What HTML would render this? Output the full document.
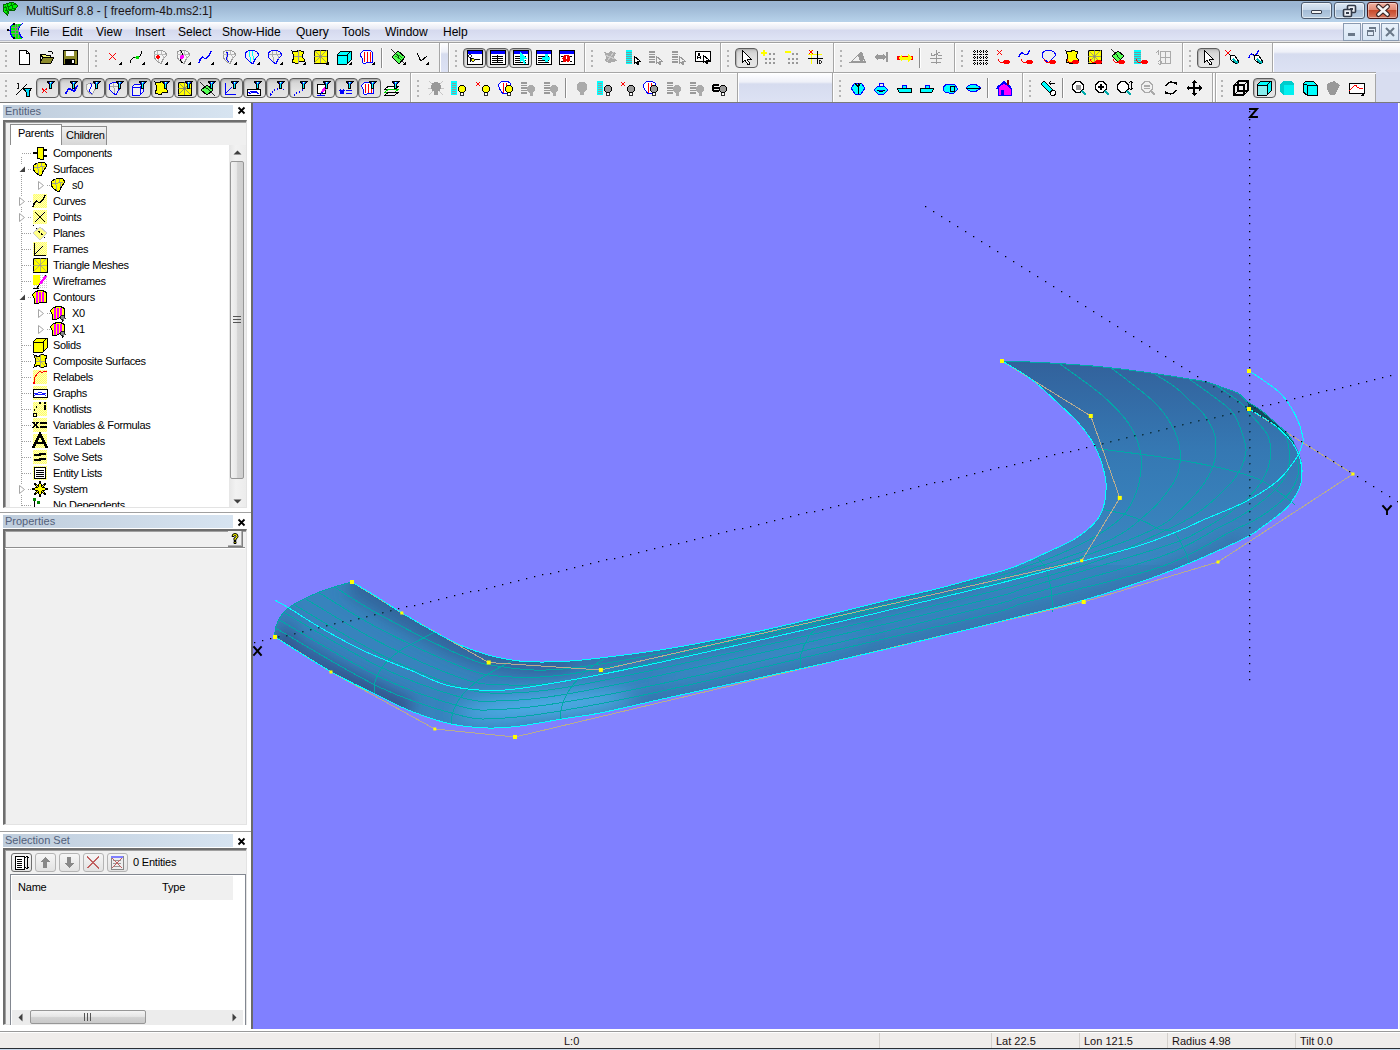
<!DOCTYPE html>
<html><head><meta charset="utf-8">
<style>
*{margin:0;padding:0;box-sizing:border-box}
html,body{width:1400px;height:1050px;overflow:hidden;background:#f0f0f0;font-family:"Liberation Sans",sans-serif;font-size:11px;color:#000}
.a{position:absolute}
svg{position:absolute;overflow:visible}
.t{position:absolute;white-space:pre;line-height:1}
.mi{position:absolute;top:25px;font-size:12px;color:#000;white-space:pre;line-height:14px}
.wb{position:absolute;top:2px;height:17px;border:1px solid #4c5a6e;border-radius:3px;background:linear-gradient(#dce8f4 0,#c6d6e8 45%,#a4bcd6 50%,#b8cde2 100%);box-shadow:inset 0 0 0 1px rgba(255,255,255,.55)}
.mb{position:absolute;top:23px;width:18px;height:18px;border:1px solid #8a9ab0;background:linear-gradient(#eaf2fb,#d8e6f5)}
.grip{position:absolute;width:3px;height:20px;background:radial-gradient(circle at 1px 1px,#b4b4b4 0.9px,transparent 1.1px) 0 0/3px 5px}
.bsep{position:absolute;width:2px;height:29px;border-left:1px solid #a6a6a6;border-right:1px solid #fff}
.isep{position:absolute;width:2px;height:20px;border-left:1px solid #8c8c8c;border-right:1px solid #fff}
.pb{position:absolute;width:23px;height:20px;border:1.5px solid #5e5e5e;border-radius:4px;background:linear-gradient(#c4c4c4,#d8d8d8 25%,#e2e2e2 60%,#e6e6e6);box-shadow:inset 1px 1px 1px #b0b0b0}
.hdr{position:absolute;height:13px;background:linear-gradient(90deg,#bfcddc,#d7e4f1);color:#52607a;font-size:11px;line-height:13px;padding-left:2px;white-space:pre}
.xcl{position:absolute;font-size:11px;font-weight:bold;line-height:11px}
.tr{position:absolute;font-size:11px;letter-spacing:-0.35px;white-space:pre;line-height:12px}

</style></head><body>
<!-- title bar -->
<div class="a" style="left:0;top:0;width:1400px;height:22px;background:linear-gradient(#222 0,#222 1px,#9bb5d2 1px,#9cb6d3 6px,#b6d1e9 21px,#b6d1e9 22px)"></div>
<svg style="left:0;top:0" width="24" height="22" viewBox="0 0 24 22" shape-rendering="crispEdges"><path d="M3 5 L9 3 L13 2 L18 6 L14 10.5 L9 11 L7.5 15 L3 11 Z" fill="#00ee00" stroke="#006600" stroke-width="1"/><path d="M4 8 L16 4 M5 11 L15 8 M7 4 L9 10 M11 3 L13 9 M5 6 L8 13" stroke="#007700" stroke-width="1" fill="none"/></svg>
<div class="t" style="left:26px;top:5px;font-size:12px;color:#1e1616">MultiSurf 8.8 - [ freeform-4b.ms2:1]</div>
<div class="wb" style="left:1301px;width:31px"></div>
<div class="wb" style="left:1334px;width:31px"></div>
<div class="a" style="left:1367px;top:2px;width:31px;height:17px;border:1px solid #4a1414;border-radius:3px;background:linear-gradient(#f0b0a0 0,#e08c78 45%,#c84a2c 50%,#d87860 100%);box-shadow:inset 0 0 0 1px rgba(255,255,255,.4)"></div>
<div class="a" style="left:1311px;top:10px;width:11px;height:4px;background:#f4f4f4;border:1px solid #3a4050;border-radius:1px"></div>
<svg style="left:1340px;top:3px" width="20" height="16" viewBox="0 0 20 16"><rect x="7.5" y="2.5" width="8" height="7" rx="1" fill="#eceff4" stroke="#323a48" stroke-width="1.6"/><rect x="10" y="5" width="3" height="2" fill="#323a48"/><rect x="3.5" y="6.5" width="8" height="7" rx="1" fill="#eceff4" stroke="#323a48" stroke-width="1.6"/><rect x="6" y="9" width="3" height="2" fill="#323a48"/></svg>
<svg style="left:1375px;top:4px" width="16" height="13" viewBox="0 0 16 13"><path d="M3.5 2.5 L12.5 10.5 M12.5 2.5 L3.5 10.5" stroke="#3a2424" stroke-width="5" stroke-linecap="round"/><path d="M3.5 2.5 L12.5 10.5 M12.5 2.5 L3.5 10.5" stroke="#f4f4f4" stroke-width="2.6" stroke-linecap="round"/></svg>
<!-- menu bar -->
<div class="a" style="left:0;top:22px;width:1400px;height:21px;background:linear-gradient(#fff 0,#f4f5fa 3px,#e8eaf4 7px,#d5d9ee 8px,#dfe4f5 18px,#b8bccc 18px,#b8bccc 19px,#e8e8e8 19px,#e8e8e8 20px,#a0a0a0 20px)"></div>
<svg style="left:0;top:22px" width="26" height="20" viewBox="0 22 26 20" shape-rendering="crispEdges"><path d="M13.5 23.5 L22.5 23.5 L19 27 L18.5 30.5 L19.5 34 L22.5 38.5 L13.5 38.5 L10.5 34 L10 30.5 L11.5 26 Z" fill="#00ee00"/><path d="M22.5 23.5 L19 27 L18.5 30.5 L19.5 34 L22.5 38.5 M13.5 23.5 L11 26 L10 30.5 L10.5 34 L13.5 38.5" stroke="#0000ff" stroke-width="1.2" fill="none"/><path d="M11 27.5 H19 M10.5 30.5 H18.5 M11 33.5 H19 M15.5 24 V38 M17 24 L19 38" stroke="#8a8a8a" stroke-width="0.9" fill="none"/><rect x="13" y="23" width="2" height="2" fill="#000"/><rect x="13" y="37" width="2" height="2" fill="#000"/><rect x="7" y="29" width="2" height="2" fill="#000"/></svg>
<div class="mi" style="left:30px">File</div>
<div class="mi" style="left:62px">Edit</div>
<div class="mi" style="left:96px">View</div>
<div class="mi" style="left:135px">Insert</div>
<div class="mi" style="left:178px">Select</div>
<div class="mi" style="left:222px">Show-Hide</div>
<div class="mi" style="left:296px">Query</div>
<div class="mi" style="left:342px">Tools</div>
<div class="mi" style="left:385px">Window</div>
<div class="mi" style="left:443px">Help</div>
<div class="mb" style="left:1343px"></div>
<div class="mb" style="left:1362px"></div>
<div class="mb" style="left:1381px"></div>
<div class="a" style="left:1348px;top:33px;width:7px;height:3px;background:#6a7888"></div>
<div class="a" style="left:1367px;top:30px;width:7px;height:6px;border:1px solid #6a7888;border-top-width:2px"></div>
<div class="a" style="left:1369px;top:27px;width:7px;height:5px;border-top:2px solid #6a7888;border-right:1px solid #6a7888"></div>
<svg style="left:1385px;top:27px" width="10" height="10" viewBox="0 0 10 10"><path d="M1 1 L9 9 M9 1 L1 9" stroke="#6a7888" stroke-width="2"/></svg>

<div class="a" style="left:0;top:43px;width:1400px;height:60px;background:#f0f0f0"></div>
<div class="a" style="left:0;top:43px;width:1400px;height:1px;background:#fff"></div>
<div class="a" style="left:0;top:72px;width:1400px;height:1px;background:#a6a6a6"></div>
<div class="a" style="left:0;top:73px;width:1400px;height:1px;background:#fff"></div>
<div class="a" style="left:0;top:102px;width:1400px;height:1px;background:#7a7a7a"></div>
<div class="a" style="left:441px;top:44px;width:7px;height:28px;background:linear-gradient(#fdfdff 0,#eef0f8 8px,#d6dcef 10px,#dde2f4 29px)"></div>
<div class="a" style="left:1274px;top:44px;width:126px;height:28px;background:linear-gradient(#fdfdff 0,#eef0f8 8px,#d6dcef 10px,#dde2f4 29px)"></div>
<div class="a" style="left:739px;top:74px;width:93px;height:28px;background:linear-gradient(#fdfdff 0,#eef0f8 8px,#d6dcef 10px,#dde2f4 29px)"></div>
<div class="a" style="left:1376px;top:72px;width:24px;height:30px;background:#d8ddf0"></div>
<div class="grip" style="left:5px;top:50px"></div>
<svg style="left:16px;top:49px" width="16" height="16" viewBox="0 0 16 16" shape-rendering="crispEdges"><path d="M3 1 L10 1 L13 4 L13 15 L3 15 Z" fill="#fff" stroke="#000"/><path d="M10 1 L10 4 L13 4" fill="none" stroke="#000"/></svg>
<svg style="left:39px;top:49px" width="16" height="16" viewBox="0 0 16 16" shape-rendering="crispEdges"><path d="M1 6 L1 14 L12 14 L15 8 L4 8 L1 14" fill="#8c8a2c" stroke="#000"/><path d="M1 6 L2 5 L6 5 L7 6 L11 6 L11 8 L4 8 Z" fill="#f0f070" stroke="#000"/><path d="M9 3 Q12 1 14 4 L13 5" fill="none" stroke="#000"/></svg>
<svg style="left:62px;top:49px" width="16" height="16" viewBox="0 0 16 16" shape-rendering="crispEdges"><rect x="1" y="1" width="14" height="14" fill="#8c8a2c" stroke="#000"/><rect x="4" y="2" width="8" height="5" fill="#fff"/><rect x="3" y="10" width="10" height="5" fill="#000"/><rect x="10" y="11" width="2" height="3" fill="#fff"/></svg>
<div class="bsep" style="left:88px;top:43px"></div>
<div class="grip" style="left:95px;top:50px"></div>
<svg style="left:106px;top:49px" width="16" height="16" viewBox="0 0 16 16" shape-rendering="crispEdges"><path d="M3 4 L10 11 M10 4 L3 11" stroke="#f00" stroke-width="1"/><path d="M12 16 L16 12 L16 16 Z" fill="#000"/></svg>
<svg style="left:129px;top:49px" width="16" height="16" viewBox="0 0 16 16" shape-rendering="crispEdges"><path d="M1 14 Q3 7 7 9 Q11 10 13 2" fill="none" stroke="#000" stroke-width="1"/><circle cx="8.5" cy="8.5" r="2" fill="#0d0"/><path d="M12 16 L16 12 L16 16 Z" fill="#000"/></svg>
<svg style="left:152px;top:49px" width="16" height="16" viewBox="0 0 16 16" shape-rendering="crispEdges"><path d="M2 3 Q7 -1 13 3 L15 6 Q11 9 9 15 Q4 12 2 8 Z" fill="#f4f4f4" stroke="#999" stroke-width="1"/><path d="M5 2 L7 13 M9 2 L12 10 M2 6 L14 5" stroke="#bbb" stroke-width="1" fill="none"/><circle cx="6" cy="8" r="1.8" fill="#f00"/><path d="M12 16 L16 12 L16 16 Z" fill="#000"/></svg>
<svg style="left:175px;top:49px" width="16" height="16" viewBox="0 0 16 16" shape-rendering="crispEdges"><path d="M2 3 Q7 -1 13 3 L15 6 Q11 9 9 15 Q4 12 2 8 Z" fill="#f4f4f4" stroke="#999" stroke-width="1"/><path d="M5 2 L7 13 M9 2 L12 10 M2 6 L14 5" stroke="#bbb" stroke-width="1" fill="none"/><path d="M5 1 Q9 4 6 8 Q4 12 8 14" fill="none" stroke="#000"/><circle cx="7" cy="8" r="2" fill="#f0f"/><path d="M12 16 L16 12 L16 16 Z" fill="#000"/></svg>
<svg style="left:198px;top:49px" width="16" height="16" viewBox="0 0 16 16" shape-rendering="crispEdges"><path d="M1 14 Q3 6 6 9 Q9 12 13 2" fill="none" stroke="#00f" stroke-width="1.4"/><path d="M12 16 L16 12 L16 16 Z" fill="#000"/></svg>
<svg style="left:221px;top:49px" width="16" height="16" viewBox="0 0 16 16" shape-rendering="crispEdges"><path d="M2 3 Q7 -1 13 3 L15 6 Q11 9 9 15 Q4 12 2 8 Z" fill="#f4f4f4" stroke="#999" stroke-width="1"/><path d="M5 2 L7 13 M9 2 L12 10 M2 6 L14 5" stroke="#bbb" stroke-width="1" fill="none"/><path d="M5 3 Q8 4 6 8 Q5 11 8 13" fill="none" stroke="#00f" stroke-width="1"/><path d="M12 16 L16 12 L16 16 Z" fill="#000"/></svg>
<svg style="left:244px;top:49px" width="16" height="16" viewBox="0 0 16 16" shape-rendering="crispEdges"><path d="M1 4 Q7 -1 13 3 L15 6 Q11 9 9 15 Q4 12 1 8 Z" fill="#f0f0f0" stroke="#00f" stroke-width="1"/><path d="M5 2 L7 13 M8 2 L10 11" stroke="#0ff" stroke-width="1"/><path d="M12 16 L16 12 L16 16 Z" fill="#000"/></svg>
<svg style="left:267px;top:49px" width="16" height="16" viewBox="0 0 16 16" shape-rendering="crispEdges"><path d="M1 4 Q7 -1 13 3 L15 6 Q11 9 9 15 Q4 12 1 8 Z" fill="#eee" stroke="#00f" stroke-width="1"/><path d="M5 2 L7 13 M9 2 L12 10 M2 6 L14 5" stroke="#aaa" stroke-width="1"/><path d="M12 16 L16 12 L16 16 Z" fill="#000"/></svg>
<svg style="left:290px;top:49px" width="16" height="16" viewBox="0 0 16 16" shape-rendering="crispEdges"><path d="M2 2 L7 3 L8 1 L14 3 L12 7 L15 12 L9 13 L8 15 L2 13 L4 8 Z" fill="#ff0" stroke="#000" stroke-width="1"/><path d="M4 8 L12 7 M8 1 L8 15" stroke="#999" fill="none"/><path d="M12 16 L16 12 L16 16 Z" fill="#000"/></svg>
<svg style="left:313px;top:49px" width="16" height="16" viewBox="0 0 16 16" shape-rendering="crispEdges"><rect x="1" y="1" width="13" height="13" fill="#ff0" stroke="#000"/><path d="M1 1 L14 14 M14 1 L1 14 M7.5 1 L7.5 14 M1 7.5 L14 7.5" stroke="#888" stroke-width="0.8"/><path d="M12 16 L16 12 L16 16 Z" fill="#000"/></svg>
<svg style="left:336px;top:49px" width="16" height="16" viewBox="0 0 16 16" shape-rendering="crispEdges"><path d="M1 6 L5 2 L15 2 L15 11 L11 15 L1 15 Z" fill="#0ff" stroke="#000"/><path d="M1 6 L11 6 L15 2 M11 6 L11 15" fill="none" stroke="#000"/><path d="M12 16 L16 12 L16 16 Z" fill="#000"/></svg>
<svg style="left:359px;top:49px" width="16" height="16" viewBox="0 0 16 16" shape-rendering="crispEdges"><path d="M2 4 Q5 0 9 2 Q13 1 14 5 L13 14 L9 13 L5 15 L3 13 L3 9 Q1 7 2 4 Z" fill="#fff" stroke="#00f" stroke-width="1"/><path d="M5 3 L5 13 M8 3 L8 13 M11 3 L11 13" stroke="#f00" stroke-width="1"/><path d="M12 16 L16 12 L16 16 Z" fill="#000"/></svg>
<div class="isep" style="left:381px;top:48px"></div>
<svg style="left:390px;top:49px" width="16" height="16" viewBox="0 0 16 16" shape-rendering="crispEdges"><path d="M8 2 L15 8 L9 15 L2 8 Z" fill="#5f5" stroke="#000"/><path d="M1 0 L16 16" stroke="#000" stroke-width="0.8"/><path d="M5 7 L11 11 M7 5 L12 9" stroke="#080" stroke-width="0.8"/><path d="M12 16 L16 12 L16 16 Z" fill="#000"/></svg>
<svg style="left:413px;top:49px" width="16" height="16" viewBox="0 0 16 16" shape-rendering="crispEdges"><path d="M4 4 L8 12 L14 7 M8 12 L6 9" fill="none" stroke="#000" stroke-width="1"/><path d="M12 16 L16 12 L16 16 Z" fill="#000"/></svg>
<div class="bsep" style="left:439px;top:43px"></div>
<div class="bsep" style="left:448px;top:43px"></div>
<div class="grip" style="left:455px;top:50px"></div>
<div class="pb" style="left:463px;top:48px"></div>
<svg style="left:466px;top:49px" width="16" height="16" viewBox="0 0 16 16" shape-rendering="crispEdges"><rect x="1" y="1" width="15" height="14" fill="#fff" stroke="#000" stroke-width="1"/><rect x="1.5" y="1.5" width="14" height="3" fill="#00f"/><path d="M4 7 L4 13 M4 9 L7 9 M9 10 L14 10" stroke="#000"/><circle cx="4" cy="7" r="1.3" fill="#fff" stroke="#000" stroke-width="0.8"/><circle cx="7" cy="11" r="1.3" fill="#ff0" stroke="#000" stroke-width="0.8"/></svg>
<div class="pb" style="left:486px;top:48px"></div>
<svg style="left:489px;top:49px" width="16" height="16" viewBox="0 0 16 16" shape-rendering="crispEdges"><rect x="1" y="1" width="15" height="14" fill="#fff" stroke="#000" stroke-width="1"/><rect x="1.5" y="1.5" width="14" height="3" fill="#00f"/><path d="M3 7 L14 7 M3 9 L14 9 M3 11 L14 11 M3 13 L14 13 M8.5 6 L8.5 14" stroke="#000" stroke-width="1"/></svg>
<div class="pb" style="left:509px;top:48px"></div>
<svg style="left:512px;top:49px" width="16" height="16" viewBox="0 0 16 16" shape-rendering="crispEdges"><rect x="1" y="1" width="15" height="14" fill="#fff" stroke="#000" stroke-width="1"/><rect x="1.5" y="1.5" width="14" height="3" fill="#00f"/><path d="M3 7 L14 7 M3 9 L14 9 M3 11 L14 11 M3 13 L14 13" stroke="#000" stroke-width="1"/><path d="M8 3 L15 10 L12 10 L14 15 L12 15 L10 11 L8 13 Z" fill="#0ff"/></svg>
<svg style="left:535px;top:49px" width="16" height="16" viewBox="0 0 16 16" shape-rendering="crispEdges"><rect x="1" y="1" width="15" height="14" fill="#fff" stroke="#000" stroke-width="1"/><rect x="1.5" y="1.5" width="14" height="3" fill="#00f"/><path d="M3 7 L14 7 M3 9 L14 9 M3 11 L14 11 M3 13 L14 13" stroke="#000" stroke-width="1"/><path d="M7 9 L15 9 M11 5 L11 13" stroke="#0ff" stroke-width="3"/></svg>
<svg style="left:558px;top:49px" width="16" height="16" viewBox="0 0 16 16" shape-rendering="crispEdges"><rect x="1" y="1" width="15" height="14" fill="#fff" stroke="#000" stroke-width="1"/><rect x="1.5" y="1.5" width="14" height="3" fill="#00f"/><circle cx="8.5" cy="9.5" r="4" fill="#e00"/><path d="M8.5 7 L8.5 10 M8.5 11.5 L8.5 12.5" stroke="#fff" stroke-width="1.4"/><path d="M3 7 L5 7 M12 7 L14 7 M3 12 L5 12 M12 12 L14 12" stroke="#000"/></svg>
<div class="bsep" style="left:584px;top:43px"></div>
<div class="grip" style="left:591px;top:50px"></div>
<svg style="left:602px;top:49px" width="16" height="16" viewBox="0 0 16 16" shape-rendering="crispEdges"><path d="M2 3 L6 4 L9 2 L14 4 L12 8 L15 12 L10 13 L7 14 L3 12 L4 8 Z" fill="#aaa"/><path d="M3 6 L13 10 M5 12 L12 3" stroke="#ccc" stroke-width="1"/></svg>
<svg style="left:625px;top:49px" width="16" height="16" viewBox="0 0 16 16" shape-rendering="crispEdges"><rect x="1" y="1" width="6" height="14" fill="#0ff"/><path d="M1 3 L7 3 M1 5 L7 5 M1 7 L7 7 M1 9 L7 9 M1 11 L7 11 M1 13 L7 13" stroke="#888" stroke-width="0.8"/><path d="M9 7 L9 15 L11 13 L13 16 L14 15 L12 12 L15 12 Z" fill="#fff" stroke="#000"/></svg>
<svg style="left:648px;top:49px" width="16" height="16" viewBox="0 0 16 16" shape-rendering="crispEdges"><path d="M1 3 L7 3 M1 5.5 L7 5.5 M1 8 L7 8 M1 10.5 L7 10.5 M1 13 L7 13" stroke="#999" stroke-width="1.3"/><path d="M8 7 L8 15 L10 13 L12 16 L13 15 L11 12 L14 12 Z" fill="#f0f0f0" stroke="#999"/></svg>
<svg style="left:671px;top:49px" width="16" height="16" viewBox="0 0 16 16" shape-rendering="crispEdges"><path d="M1 3 L7 3 M1 5.5 L7 5.5 M1 8 L7 8 M1 10.5 L7 10.5 M1 13 L7 13" stroke="#999" stroke-width="1.3"/><path d="M8 7 L8 15 L10 13 L12 16 L13 15 L11 12 L14 12 Z" fill="#f0f0f0" stroke="#999"/></svg>
<svg style="left:694px;top:49px" width="16" height="16" viewBox="0 0 16 16" shape-rendering="crispEdges"><rect x="1" y="2" width="15" height="10" fill="#fff" stroke="#000" stroke-width="1"/><path d="M3 10 L5 4 L7 10 M4 8 L6 8" stroke="#000" fill="none"/><path d="M9 6 L9 14 L11 12 L13 15 L14 14 L12 11 L15 11 Z" fill="#fff" stroke="#000"/></svg>
<div class="bsep" style="left:720px;top:43px"></div>
<div class="grip" style="left:727px;top:50px"></div>
<div class="pb" style="left:735px;top:48px"></div>
<svg style="left:738px;top:49px" width="16" height="16" viewBox="0 0 16 16" shape-rendering="crispEdges"><path d="M4 1 L4 14 L7 11 L10 16 L12 15 L9 10 L13 10 Z" fill="#fff" stroke="#000" stroke-width="1"/></svg>
<svg style="left:761px;top:49px" width="16" height="16" viewBox="0 0 16 16" shape-rendering="crispEdges"><path d="M3 1 L3 7 M0 4 L6 4" stroke="#ff0" stroke-width="2"/><path d="M8 5 h2 M12 5 h2 M4 10 h2 M8 10 h2 M12 10 h2 M4 14 h2 M8 14 h2 M12 14 h2" stroke="#999" stroke-width="2"/></svg>
<svg style="left:784px;top:49px" width="16" height="16" viewBox="0 0 16 16" shape-rendering="crispEdges"><path d="M1 3 L7 3" stroke="#ff0" stroke-width="2"/><path d="M8 5 h2 M12 5 h2 M4 10 h2 M8 10 h2 M12 10 h2 M4 14 h2 M8 14 h2 M12 14 h2" stroke="#999" stroke-width="2"/></svg>
<svg style="left:807px;top:49px" width="16" height="16" viewBox="0 0 16 16" shape-rendering="crispEdges"><path d="M4 1 L4 15 M1 5 L15 5" stroke="#ff0" stroke-width="1"/><path d="M10 2 L10 15 M1 9 L16 9" stroke="#000" stroke-width="1"/><path d="M2 1 L6 5 M6 1 L2 5" stroke="#f00" stroke-width="1"/><path d="M12 11 L12 15 L14 14 L14 12 Z" fill="none" stroke="#000" stroke-width="0.8"/></svg>
<div class="bsep" style="left:833px;top:43px"></div>
<div class="grip" style="left:840px;top:50px"></div>
<svg style="left:850px;top:49px" width="16" height="16" viewBox="0 0 16 16" shape-rendering="crispEdges"><path d="M1 13 L10 4 L15 12 L15 13 Z" fill="none" stroke="#999" stroke-width="1.4"/><path d="M8 6 L12 3 L15 11 L10 12 Z" fill="#999"/></svg>
<svg style="left:873px;top:49px" width="16" height="16" viewBox="0 0 16 16" shape-rendering="crispEdges"><path d="M1 8 L5 4 L5 6 L10 6 L10 4 L13 8 L10 12 L10 10 L5 10 L5 12 Z" fill="#999"/><path d="M14 3 L14 13" stroke="#999" stroke-width="2"/></svg>
<svg style="left:897px;top:49px" width="16" height="16" viewBox="0 0 16 16" shape-rendering="crispEdges"><rect x="0" y="7" width="16" height="4" fill="#f00"/><path d="M1 9 L5 5 L5 7.5 L11 7.5 L11 5 L15 9 L11 13 L11 10.5 L5 10.5 L5 13 Z" fill="#ff0"/></svg>
<div class="isep" style="left:919px;top:48px"></div>
<svg style="left:928px;top:49px" width="16" height="16" viewBox="0 0 16 16" shape-rendering="crispEdges"><path d="M8 1 L8 15 M2 9 L14 9 M3 13 L13 13 M4 4 Q2 6 5 7 L12 3 M6 5 L14 7" stroke="#999" stroke-width="1" fill="none"/></svg>
<div class="bsep" style="left:954px;top:43px"></div>
<div class="grip" style="left:961px;top:50px"></div>
<svg style="left:972px;top:49px" width="16" height="16" viewBox="0 0 16 16" shape-rendering="crispEdges"><rect x="2" y="1" width="1" height="1" fill="#000"/><rect x="2" y="3" width="1" height="1" fill="#000"/><rect x="2" y="5" width="1" height="1" fill="#000"/><rect x="2" y="7" width="1" height="1" fill="#000"/><rect x="2" y="9" width="1" height="1" fill="#000"/><rect x="2" y="11" width="1" height="1" fill="#000"/><rect x="2" y="13" width="1" height="1" fill="#000"/><rect x="2" y="15" width="1" height="1" fill="#000"/><rect x="5" y="1" width="1" height="1" fill="#000"/><rect x="5" y="3" width="1" height="1" fill="#000"/><rect x="5" y="5" width="1" height="1" fill="#000"/><rect x="5" y="7" width="1" height="1" fill="#000"/><rect x="5" y="9" width="1" height="1" fill="#000"/><rect x="5" y="11" width="1" height="1" fill="#000"/><rect x="5" y="13" width="1" height="1" fill="#000"/><rect x="5" y="15" width="1" height="1" fill="#000"/><rect x="8" y="1" width="1" height="1" fill="#000"/><rect x="8" y="3" width="1" height="1" fill="#000"/><rect x="8" y="5" width="1" height="1" fill="#000"/><rect x="8" y="7" width="1" height="1" fill="#000"/><rect x="8" y="9" width="1" height="1" fill="#000"/><rect x="8" y="11" width="1" height="1" fill="#000"/><rect x="8" y="13" width="1" height="1" fill="#000"/><rect x="8" y="15" width="1" height="1" fill="#000"/><rect x="11" y="1" width="1" height="1" fill="#000"/><rect x="11" y="3" width="1" height="1" fill="#000"/><rect x="11" y="5" width="1" height="1" fill="#000"/><rect x="11" y="7" width="1" height="1" fill="#000"/><rect x="11" y="9" width="1" height="1" fill="#000"/><rect x="11" y="11" width="1" height="1" fill="#000"/><rect x="11" y="13" width="1" height="1" fill="#000"/><rect x="11" y="15" width="1" height="1" fill="#000"/><rect x="14" y="1" width="1" height="1" fill="#000"/><rect x="14" y="3" width="1" height="1" fill="#000"/><rect x="14" y="5" width="1" height="1" fill="#000"/><rect x="14" y="7" width="1" height="1" fill="#000"/><rect x="14" y="9" width="1" height="1" fill="#000"/><rect x="14" y="11" width="1" height="1" fill="#000"/><rect x="14" y="13" width="1" height="1" fill="#000"/><rect x="14" y="15" width="1" height="1" fill="#000"/><rect x="1" y="2" width="1" height="1" fill="#000"/><rect x="3" y="2" width="1" height="1" fill="#000"/><rect x="5" y="2" width="1" height="1" fill="#000"/><rect x="7" y="2" width="1" height="1" fill="#000"/><rect x="9" y="2" width="1" height="1" fill="#000"/><rect x="11" y="2" width="1" height="1" fill="#000"/><rect x="13" y="2" width="1" height="1" fill="#000"/><rect x="15" y="2" width="1" height="1" fill="#000"/><rect x="1" y="5" width="1" height="1" fill="#000"/><rect x="3" y="5" width="1" height="1" fill="#000"/><rect x="5" y="5" width="1" height="1" fill="#000"/><rect x="7" y="5" width="1" height="1" fill="#000"/><rect x="9" y="5" width="1" height="1" fill="#000"/><rect x="11" y="5" width="1" height="1" fill="#000"/><rect x="13" y="5" width="1" height="1" fill="#000"/><rect x="15" y="5" width="1" height="1" fill="#000"/><rect x="1" y="8" width="1" height="1" fill="#000"/><rect x="3" y="8" width="1" height="1" fill="#000"/><rect x="5" y="8" width="1" height="1" fill="#000"/><rect x="7" y="8" width="1" height="1" fill="#000"/><rect x="9" y="8" width="1" height="1" fill="#000"/><rect x="11" y="8" width="1" height="1" fill="#000"/><rect x="13" y="8" width="1" height="1" fill="#000"/><rect x="15" y="8" width="1" height="1" fill="#000"/><rect x="1" y="11" width="1" height="1" fill="#000"/><rect x="3" y="11" width="1" height="1" fill="#000"/><rect x="5" y="11" width="1" height="1" fill="#000"/><rect x="7" y="11" width="1" height="1" fill="#000"/><rect x="9" y="11" width="1" height="1" fill="#000"/><rect x="11" y="11" width="1" height="1" fill="#000"/><rect x="13" y="11" width="1" height="1" fill="#000"/><rect x="15" y="11" width="1" height="1" fill="#000"/><rect x="1" y="14" width="1" height="1" fill="#000"/><rect x="3" y="14" width="1" height="1" fill="#000"/><rect x="5" y="14" width="1" height="1" fill="#000"/><rect x="7" y="14" width="1" height="1" fill="#000"/><rect x="9" y="14" width="1" height="1" fill="#000"/><rect x="11" y="14" width="1" height="1" fill="#000"/><rect x="13" y="14" width="1" height="1" fill="#000"/><rect x="15" y="14" width="1" height="1" fill="#000"/></svg>
<svg style="left:995px;top:49px" width="16" height="16" viewBox="0 0 16 16" shape-rendering="crispEdges"><path d="M2 1 L7 6 M7 1 L2 6" stroke="#f00" stroke-width="1"/><path d="M3 10 Q4 14 8 13" fill="none" stroke="#f00" stroke-width="1"/><ellipse cx="11.5" cy="13" rx="3.5" ry="2.3" fill="#f00"/></svg>
<svg style="left:1018px;top:49px" width="16" height="16" viewBox="0 0 16 16" shape-rendering="crispEdges"><path d="M1 8 Q3 2 6 5 Q9 8 12 1" fill="none" stroke="#00f" stroke-width="1.3"/><path d="M3 10 Q4 14 8 13" fill="none" stroke="#f00" stroke-width="1"/><ellipse cx="11.5" cy="13" rx="3.5" ry="2.3" fill="#f00"/></svg>
<svg style="left:1041px;top:49px" width="16" height="16" viewBox="0 0 16 16" shape-rendering="crispEdges"><path d="M1 4 Q7 -1 13 3 L15 6 Q11 9 9 14 Q4 12 1 8 Z" fill="#eee" stroke="#00f"/><path d="M3 10 Q4 14 8 13" fill="none" stroke="#f00" stroke-width="1"/><ellipse cx="11.5" cy="13" rx="3.5" ry="2.3" fill="#f00"/></svg>
<svg style="left:1064px;top:49px" width="16" height="16" viewBox="0 0 16 16" shape-rendering="crispEdges"><path d="M2 2 L7 3 L8 1 L14 3 L12 7 L15 12 L9 13 L8 15 L2 13 L4 8 Z" fill="#ff0" stroke="#000"/><path d="M3 10 Q4 14 8 13" fill="none" stroke="#f00" stroke-width="1"/><ellipse cx="11.5" cy="13" rx="3.5" ry="2.3" fill="#f00"/></svg>
<svg style="left:1087px;top:49px" width="16" height="16" viewBox="0 0 16 16" shape-rendering="crispEdges"><rect x="1" y="1" width="13" height="13" fill="#ff0" stroke="#000"/><path d="M1 1 L14 14 M14 1 L1 14 M7.5 1 L7.5 14 M1 7.5 L14 7.5" stroke="#888" stroke-width="0.8"/><path d="M3 10 Q4 14 8 13" fill="none" stroke="#f00" stroke-width="1"/><ellipse cx="11.5" cy="13" rx="3.5" ry="2.3" fill="#f00"/></svg>
<svg style="left:1110px;top:49px" width="16" height="16" viewBox="0 0 16 16" shape-rendering="crispEdges"><path d="M8 2 L14 7 L8 13 L2 7 Z" fill="#5f5" stroke="#000"/><path d="M1 0 L14 14" stroke="#000" stroke-width="0.8"/><path d="M3 10 Q4 14 8 13" fill="none" stroke="#f00" stroke-width="1"/><ellipse cx="11.5" cy="13" rx="3.5" ry="2.3" fill="#f00"/></svg>
<svg style="left:1133px;top:49px" width="16" height="16" viewBox="0 0 16 16" shape-rendering="crispEdges"><rect x="1" y="1" width="7" height="14" fill="#0ff"/><path d="M1 3 L8 3 M1 5 L8 5 M1 7 L8 7 M1 9 L8 9 M1 11 L8 11 M1 13 L8 13" stroke="#888" stroke-width="0.8"/><path d="M3 10 Q4 14 8 13" fill="none" stroke="#f00" stroke-width="1"/><ellipse cx="11.5" cy="13" rx="3.5" ry="2.3" fill="#f00"/></svg>
<svg style="left:1155px;top:49px" width="16" height="16" viewBox="0 0 16 16" shape-rendering="crispEdges"><path d="M5 2 L15 2 L15 14 L5 14 Z M10 2 L10 14 M5 8 L15 8" fill="none" stroke="#aaa" stroke-width="1"/><path d="M3 6 L3 2 L1 4 M3 14 A2 2 0 1 0 3 13" stroke="#aaa" fill="none"/></svg>
<div class="bsep" style="left:1182px;top:43px"></div>
<div class="grip" style="left:1189px;top:50px"></div>
<div class="pb" style="left:1197px;top:48px"></div>
<svg style="left:1200px;top:49px" width="16" height="16" viewBox="0 0 16 16" shape-rendering="crispEdges"><path d="M4 1 L4 14 L7 11 L10 16 L12 15 L9 10 L13 10 Z" fill="#fff" stroke="#000" stroke-width="1"/></svg>
<svg style="left:1224px;top:49px" width="16" height="16" viewBox="0 0 16 16" shape-rendering="crispEdges"><path d="M1 1 L7 7 M7 1 L1 7" stroke="#f00" stroke-width="1"/><path d="M6 6 L11 7 L15 13 L12 15 L7 11 Z" fill="#fff" stroke="#000"/><path d="M11 12 L14 14 M9 10 L12 13" stroke="#0bb" stroke-width="2"/></svg>
<svg style="left:1248px;top:49px" width="16" height="16" viewBox="0 0 16 16" shape-rendering="crispEdges"><path d="M1 9 Q2 3 5 6 Q8 8 11 1" fill="none" stroke="#00f" stroke-width="1.3"/><path d="M6 6 L11 7 L15 13 L12 15 L7 11 Z" fill="#fff" stroke="#000"/><path d="M11 12 L14 14 M9 10 L12 13" stroke="#0bb" stroke-width="2"/></svg>
<div class="bsep" style="left:1272px;top:43px"></div>
<div class="grip" style="left:5px;top:80px"></div>
<svg style="left:16px;top:80px" width="16" height="16" viewBox="0 0 16 16" shape-rendering="crispEdges"><path d="M1 4 L2 3 L2 8 M1 8 L3 8" stroke="#000" stroke-width="0.9" fill="none"/><path d="M0 15 L11 4" stroke="#000"/><path d="M7 8 L16 8 L13 12 L13 16 L10 16 L10 12 Z" fill="#00e0ff" stroke="#000"/></svg>
<div class="pb" style="left:36px;top:78px"></div>
<svg style="left:39px;top:80px" width="16" height="16" viewBox="0 0 16 16" shape-rendering="crispEdges"><path d="M3 8.5 L8 13 M8 8.5 L3 13" stroke="#f00" stroke-width="1"/><path d="M7.5 0.5 H16 V1.8 L13.2 4.6 V8.5 H10.3 V4.6 L7.5 1.8 Z" fill="#000"/><path d="M9.2 1.6 H14.3 L12.3 3.8 V7.5 H11.2 V3.8 Z" fill="#00f0ff"/><path d="M10.5 1.6 H13 L11.8 3 Z" fill="#e0ffff"/><path d="M9.2 1.6 L11.2 3.8 M14.3 1.6 L12.3 3.8" stroke="#0000ff" stroke-width="0.8"/></svg>
<div class="pb" style="left:59px;top:78px"></div>
<svg style="left:62px;top:80px" width="16" height="16" viewBox="0 0 16 16" shape-rendering="crispEdges"><path d="M3.4 14.4 L6.3 8.8 L8.4 8.8 L12 11.5 L15.6 5.4" fill="none" stroke="#00f" stroke-width="1.6"/><path d="M7.5 0.5 H16 V1.8 L13.2 4.6 V8.5 H10.3 V4.6 L7.5 1.8 Z" fill="#000"/><path d="M9.2 1.6 H14.3 L12.3 3.8 V7.5 H11.2 V3.8 Z" fill="#00f0ff"/><path d="M10.5 1.6 H13 L11.8 3 Z" fill="#e0ffff"/><path d="M9.2 1.6 L11.2 3.8 M14.3 1.6 L12.3 3.8" stroke="#0000ff" stroke-width="0.8"/></svg>
<div class="pb" style="left:82px;top:78px"></div>
<svg style="left:85px;top:80px" width="16" height="16" viewBox="0 0 16 16" shape-rendering="crispEdges"><path d="M1 5 Q5 2 10 4 L12 7 Q9 10 7 15 Q3 12 1 9 Z" fill="#f4f4f4" stroke="#aaa"/><path d="M5 3 Q8 5 5 9 Q4 12 7 14" fill="none" stroke="#00f" stroke-width="1"/><path d="M7.5 0.5 H16 V1.8 L13.2 4.6 V8.5 H10.3 V4.6 L7.5 1.8 Z" fill="#000"/><path d="M9.2 1.6 H14.3 L12.3 3.8 V7.5 H11.2 V3.8 Z" fill="#00f0ff"/><path d="M10.5 1.6 H13 L11.8 3 Z" fill="#e0ffff"/><path d="M9.2 1.6 L11.2 3.8 M14.3 1.6 L12.3 3.8" stroke="#0000ff" stroke-width="0.8"/></svg>
<div class="pb" style="left:105px;top:78px"></div>
<svg style="left:108px;top:80px" width="16" height="16" viewBox="0 0 16 16" shape-rendering="crispEdges"><path d="M1 5 Q5 1 10 3 L13 7 Q10 10 8 15 Q3 12 1 9 Z" fill="#eee" stroke="#00f" stroke-width="1"/><path d="M5 3 L7 13 M2 7 L12 6" stroke="#aaa"/><path d="M7.5 0.5 H16 V1.8 L13.2 4.6 V8.5 H10.3 V4.6 L7.5 1.8 Z" fill="#000"/><path d="M9.2 1.6 H14.3 L12.3 3.8 V7.5 H11.2 V3.8 Z" fill="#00f0ff"/><path d="M10.5 1.6 H13 L11.8 3 Z" fill="#e0ffff"/><path d="M9.2 1.6 L11.2 3.8 M14.3 1.6 L12.3 3.8" stroke="#0000ff" stroke-width="0.8"/></svg>
<div class="pb" style="left:128px;top:78px"></div>
<svg style="left:131px;top:80px" width="16" height="16" viewBox="0 0 16 16" shape-rendering="crispEdges"><path d="M1 7 L4 4 L12 4 L12 12 L9 15 L1 15 Z" fill="#f0f0f0" stroke="#00f" stroke-width="1"/><path d="M1 7 L9 7 L12 4 M9 7 L9 15" fill="none" stroke="#00f" stroke-width="1"/><path d="M7.5 0.5 H16 V1.8 L13.2 4.6 V8.5 H10.3 V4.6 L7.5 1.8 Z" fill="#000"/><path d="M9.2 1.6 H14.3 L12.3 3.8 V7.5 H11.2 V3.8 Z" fill="#00f0ff"/><path d="M10.5 1.6 H13 L11.8 3 Z" fill="#e0ffff"/><path d="M9.2 1.6 L11.2 3.8 M14.3 1.6 L12.3 3.8" stroke="#0000ff" stroke-width="0.8"/></svg>
<div class="pb" style="left:151px;top:78px"></div>
<svg style="left:154px;top:80px" width="16" height="16" viewBox="0 0 16 16" shape-rendering="crispEdges"><path d="M1 2 L6 3 L7 1 L13 3 L11 7 L14 12 L8 13 L7 15 L1 13 L3 8 Z" fill="#ff0" stroke="#000"/><path d="M7.5 0.5 H16 V1.8 L13.2 4.6 V8.5 H10.3 V4.6 L7.5 1.8 Z" fill="#000"/><path d="M9.2 1.6 H14.3 L12.3 3.8 V7.5 H11.2 V3.8 Z" fill="#00f0ff"/><path d="M10.5 1.6 H13 L11.8 3 Z" fill="#e0ffff"/><path d="M9.2 1.6 L11.2 3.8 M14.3 1.6 L12.3 3.8" stroke="#0000ff" stroke-width="0.8"/></svg>
<div class="pb" style="left:174px;top:78px"></div>
<svg style="left:177px;top:80px" width="16" height="16" viewBox="0 0 16 16" shape-rendering="crispEdges"><rect x="1" y="2" width="13" height="13" fill="#ff0" stroke="#000"/><path d="M1 2 L14 15 M14 2 L1 15 M7.5 2 L7.5 15 M1 8.5 L14 8.5" stroke="#777" stroke-width="0.8"/><path d="M7.5 0.5 H16 V1.8 L13.2 4.6 V8.5 H10.3 V4.6 L7.5 1.8 Z" fill="#000"/><path d="M9.2 1.6 H14.3 L12.3 3.8 V7.5 H11.2 V3.8 Z" fill="#00f0ff"/><path d="M10.5 1.6 H13 L11.8 3 Z" fill="#e0ffff"/><path d="M9.2 1.6 L11.2 3.8 M14.3 1.6 L12.3 3.8" stroke="#0000ff" stroke-width="0.8"/></svg>
<div class="pb" style="left:197px;top:78px"></div>
<svg style="left:200px;top:80px" width="16" height="16" viewBox="0 0 16 16" shape-rendering="crispEdges"><path d="M7 5 L13 10 L7 15 L1 10 Z" fill="#5f5" stroke="#000"/><path d="M0 2 L15 16" stroke="#000" stroke-width="0.8"/><path d="M7.5 0.5 H16 V1.8 L13.2 4.6 V8.5 H10.3 V4.6 L7.5 1.8 Z" fill="#000"/><path d="M9.2 1.6 H14.3 L12.3 3.8 V7.5 H11.2 V3.8 Z" fill="#00f0ff"/><path d="M10.5 1.6 H13 L11.8 3 Z" fill="#e0ffff"/><path d="M9.2 1.6 L11.2 3.8 M14.3 1.6 L12.3 3.8" stroke="#0000ff" stroke-width="0.8"/></svg>
<div class="pb" style="left:220px;top:78px"></div>
<svg style="left:223px;top:80px" width="16" height="16" viewBox="0 0 16 16" shape-rendering="crispEdges"><path d="M2 3 L2 14 L13 14 M2 14 L9 7" stroke="#00f" stroke-width="1" fill="none"/><path d="M7.5 0.5 H16 V1.8 L13.2 4.6 V8.5 H10.3 V4.6 L7.5 1.8 Z" fill="#000"/><path d="M9.2 1.6 H14.3 L12.3 3.8 V7.5 H11.2 V3.8 Z" fill="#00f0ff"/><path d="M10.5 1.6 H13 L11.8 3 Z" fill="#e0ffff"/><path d="M9.2 1.6 L11.2 3.8 M14.3 1.6 L12.3 3.8" stroke="#0000ff" stroke-width="0.8"/></svg>
<div class="pb" style="left:243px;top:78px"></div>
<svg style="left:246px;top:80px" width="16" height="16" viewBox="0 0 16 16" shape-rendering="crispEdges"><rect x="1" y="9" width="13" height="6" fill="#fff" stroke="#000" stroke-width="1"/><path d="M2 13 Q7 9 12 13 M3 14 Q8 11 13 14" stroke="#00f" fill="none"/><path d="M10 8 L10 4" stroke="#000"/><path d="M7.5 0.5 H16 V1.8 L13.2 4.6 V8.5 H10.3 V4.6 L7.5 1.8 Z" fill="#000"/><path d="M9.2 1.6 H14.3 L12.3 3.8 V7.5 H11.2 V3.8 Z" fill="#00f0ff"/><path d="M10.5 1.6 H13 L11.8 3 Z" fill="#e0ffff"/><path d="M9.2 1.6 L11.2 3.8 M14.3 1.6 L12.3 3.8" stroke="#0000ff" stroke-width="0.8"/></svg>
<div class="pb" style="left:266px;top:78px"></div>
<svg style="left:269px;top:80px" width="16" height="16" viewBox="0 0 16 16" shape-rendering="crispEdges"><path d="M1 15 h1 M3 12 h1 M5 10 h1 M8 9 h1 M11 8 h1" stroke="#00f" stroke-width="2"/><path d="M1 13 L3 15 M14 9 L15 10" stroke="#00f"/><path d="M7.5 0.5 H16 V1.8 L13.2 4.6 V8.5 H10.3 V4.6 L7.5 1.8 Z" fill="#000"/><path d="M9.2 1.6 H14.3 L12.3 3.8 V7.5 H11.2 V3.8 Z" fill="#00f0ff"/><path d="M10.5 1.6 H13 L11.8 3 Z" fill="#e0ffff"/><path d="M9.2 1.6 L11.2 3.8 M14.3 1.6 L12.3 3.8" stroke="#0000ff" stroke-width="0.8"/></svg>
<div class="pb" style="left:289px;top:78px"></div>
<svg style="left:292px;top:80px" width="16" height="16" viewBox="0 0 16 16" shape-rendering="crispEdges"><path d="M2 15 h1 M4 13 h1 M7 12 h1 M10 10 h1" stroke="#00f" stroke-width="2"/><path d="M7.5 0.5 H16 V1.8 L13.2 4.6 V8.5 H10.3 V4.6 L7.5 1.8 Z" fill="#000"/><path d="M9.2 1.6 H14.3 L12.3 3.8 V7.5 H11.2 V3.8 Z" fill="#00f0ff"/><path d="M10.5 1.6 H13 L11.8 3 Z" fill="#e0ffff"/><path d="M9.2 1.6 L11.2 3.8 M14.3 1.6 L12.3 3.8" stroke="#0000ff" stroke-width="0.8"/></svg>
<div class="pb" style="left:312px;top:78px"></div>
<svg style="left:315px;top:80px" width="16" height="16" viewBox="0 0 16 16" shape-rendering="crispEdges"><path d="M2 4 L10 4 L10 13 L2 13 Z" fill="#fff" stroke="#000"/><path d="M2 15 L10 15 M5 15 L12 6" stroke="#00f" stroke-width="1"/><path d="M7 12 L11 7" stroke="#f0f" stroke-width="2.5"/><path d="M7.5 0.5 H16 V1.8 L13.2 4.6 V8.5 H10.3 V4.6 L7.5 1.8 Z" fill="#000"/><path d="M9.2 1.6 H14.3 L12.3 3.8 V7.5 H11.2 V3.8 Z" fill="#00f0ff"/><path d="M10.5 1.6 H13 L11.8 3 Z" fill="#e0ffff"/><path d="M9.2 1.6 L11.2 3.8 M14.3 1.6 L12.3 3.8" stroke="#0000ff" stroke-width="0.8"/></svg>
<div class="pb" style="left:335px;top:78px"></div>
<svg style="left:338px;top:80px" width="16" height="16" viewBox="0 0 16 16" shape-rendering="crispEdges"><path d="M2 10 L6 14 M6 10 L2 14" stroke="#00f" stroke-width="1.5"/><path d="M8 10.5 H14 M8 13.5 H14" stroke="#00f" stroke-width="1"/><path d="M7.5 0.5 H16 V1.8 L13.2 4.6 V8.5 H10.3 V4.6 L7.5 1.8 Z" fill="#000"/><path d="M9.2 1.6 H14.3 L12.3 3.8 V7.5 H11.2 V3.8 Z" fill="#00f0ff"/><path d="M10.5 1.6 H13 L11.8 3 Z" fill="#e0ffff"/><path d="M9.2 1.6 L11.2 3.8 M14.3 1.6 L12.3 3.8" stroke="#0000ff" stroke-width="0.8"/></svg>
<div class="pb" style="left:358px;top:78px"></div>
<svg style="left:361px;top:80px" width="16" height="16" viewBox="0 0 16 16" shape-rendering="crispEdges"><path d="M1 5 Q4 1 8 3 Q12 2 13 6 L12 14 L8 13 L4 15 L2 13 L2 9 Q0 7 1 5 Z" fill="#fff" stroke="#00f" stroke-width="1"/><path d="M4 4 L4 13 M7 4 L7 13 M10 4 L10 13" stroke="#f00" stroke-width="1"/><path d="M7.5 0.5 H16 V1.8 L13.2 4.6 V8.5 H10.3 V4.6 L7.5 1.8 Z" fill="#000"/><path d="M9.2 1.6 H14.3 L12.3 3.8 V7.5 H11.2 V3.8 Z" fill="#00f0ff"/><path d="M10.5 1.6 H13 L11.8 3 Z" fill="#e0ffff"/><path d="M9.2 1.6 L11.2 3.8 M14.3 1.6 L12.3 3.8" stroke="#0000ff" stroke-width="0.8"/></svg>
<svg style="left:384px;top:80px" width="16" height="16" viewBox="0 0 16 16" shape-rendering="crispEdges"><path d="M1 9 L5 6 L15 6 L11 9 Z" fill="#fff" stroke="#000"/><path d="M1 12 L5 9 L15 9 L11 12 Z" fill="none" stroke="#0c0" stroke-width="1"/><path d="M1 15 L5 12 L15 12 L11 15 Z" fill="none" stroke="#000"/><path d="M7.5 0.5 H16 V1.8 L13.2 4.6 V8.5 H10.3 V4.6 L7.5 1.8 Z" fill="#000"/><path d="M9.2 1.6 H14.3 L12.3 3.8 V7.5 H11.2 V3.8 Z" fill="#00f0ff"/><path d="M10.5 1.6 H13 L11.8 3 Z" fill="#e0ffff"/><path d="M9.2 1.6 L11.2 3.8 M14.3 1.6 L12.3 3.8" stroke="#0000ff" stroke-width="0.8"/></svg>
<div class="bsep" style="left:410px;top:73px"></div>
<div class="grip" style="left:417px;top:80px"></div>
<svg style="left:428px;top:80px" width="16" height="16" viewBox="0 0 16 16" shape-rendering="crispEdges"><path d="M1 1 L15 15 M15 1 L1 15 M0 8 L16 8" stroke="#bbb" stroke-width="0.8"/><circle cx="8" cy="7" r="5" fill="#999"/><rect x="6" y="11" width="4" height="4" fill="#999"/></svg>
<svg style="left:451px;top:80px" width="16" height="16" viewBox="0 0 16 16" shape-rendering="crispEdges"><rect x="0" y="1" width="6" height="14" fill="#0ff"/><path d="M1 3 H5 M1 5 H5 M1 7 H5 M1 9 H5 M1 11 H5 M1 13 H5" stroke="#999" stroke-width="1"/><circle cx="11" cy="9" r="3.8" fill="#ff0" stroke="#000"/><rect x="9.5" y="12.5" width="3" height="3" fill="#fff" stroke="#000" stroke-width="0.8"/></svg>
<svg style="left:475px;top:80px" width="16" height="16" viewBox="0 0 16 16" shape-rendering="crispEdges"><path d="M1 2 L5 6 M5 2 L1 6" stroke="#f00"/><circle cx="11" cy="9" r="3.8" fill="#ff0" stroke="#000"/><rect x="9.5" y="12.5" width="3" height="3" fill="#fff" stroke="#000" stroke-width="0.8"/></svg>
<svg style="left:498px;top:80px" width="16" height="16" viewBox="0 0 16 16" shape-rendering="crispEdges"><path d="M1 4 Q4 0 8 2 Q11 1 13 4 L12 13 L5 14 L3 11 Q0 8 1 4 Z" fill="#fff" stroke="#00f"/><path d="M5 3 L5 13 M8 3 L8 12" stroke="#f00"/><circle cx="11" cy="9" r="3.8" fill="#ff0" stroke="#000"/><rect x="9.5" y="12.5" width="3" height="3" fill="#fff" stroke="#000" stroke-width="0.8"/></svg>
<svg style="left:520px;top:80px" width="16" height="16" viewBox="0 0 16 16" shape-rendering="crispEdges"><path d="M1 3 L7 3 M1 5.5 L7 5.5 M1 8 L7 8 M1 10.5 L7 10.5 M1 13 L7 13" stroke="#999" stroke-width="1.3"/><circle cx="11" cy="9" r="3.8" fill="#aaa"/><rect x="9.5" y="12.5" width="3" height="3" fill="#aaa"/></svg>
<svg style="left:543px;top:80px" width="16" height="16" viewBox="0 0 16 16" shape-rendering="crispEdges"><path d="M1 3 L7 3 M1 5.5 L7 5.5 M1 8 L7 8 M1 10.5 L7 10.5 M1 13 L7 13" stroke="#999" stroke-width="1.3"/><circle cx="11" cy="9" r="3.8" fill="#aaa"/><rect x="9.5" y="12.5" width="3" height="3" fill="#aaa"/></svg>
<div class="isep" style="left:565px;top:78px"></div>
<svg style="left:574px;top:80px" width="16" height="16" viewBox="0 0 16 16" shape-rendering="crispEdges"><circle cx="8" cy="7" r="5.5" fill="#aaa"/><rect x="6" y="12" width="4" height="3" fill="#aaa"/></svg>
<svg style="left:597px;top:80px" width="16" height="16" viewBox="0 0 16 16" shape-rendering="crispEdges"><rect x="0" y="1" width="6" height="14" fill="#0ff"/><path d="M1 3 H5 M1 5 H5 M1 7 H5 M1 9 H5 M1 11 H5 M1 13 H5" stroke="#999" stroke-width="1"/><circle cx="11" cy="9" r="3.8" fill="#999" stroke="#000"/><rect x="9.5" y="12.5" width="3" height="3" fill="#fff" stroke="#000" stroke-width="0.8"/></svg>
<svg style="left:620px;top:80px" width="16" height="16" viewBox="0 0 16 16" shape-rendering="crispEdges"><path d="M1 2 L5 6 M5 2 L1 6" stroke="#f00"/><circle cx="11" cy="9" r="3.8" fill="#999" stroke="#000"/><rect x="9.5" y="12.5" width="3" height="3" fill="#fff" stroke="#000" stroke-width="0.8"/></svg>
<svg style="left:643px;top:80px" width="16" height="16" viewBox="0 0 16 16" shape-rendering="crispEdges"><path d="M1 4 Q4 0 8 2 Q11 1 13 4 L12 13 L5 14 L3 11 Q0 8 1 4 Z" fill="#fff" stroke="#00f"/><path d="M5 3 L5 13 M8 3 L8 12" stroke="#f00"/><circle cx="11" cy="9" r="3.8" fill="#999" stroke="#000"/><rect x="9.5" y="12.5" width="3" height="3" fill="#fff" stroke="#000" stroke-width="0.8"/></svg>
<svg style="left:666px;top:80px" width="16" height="16" viewBox="0 0 16 16" shape-rendering="crispEdges"><path d="M1 3 L7 3 M1 5.5 L7 5.5 M1 8 L7 8 M1 10.5 L7 10.5 M1 13 L7 13" stroke="#999" stroke-width="1.3"/><circle cx="11" cy="9" r="3.8" fill="#aaa"/><rect x="9.5" y="12.5" width="3" height="3" fill="#aaa"/></svg>
<svg style="left:689px;top:80px" width="16" height="16" viewBox="0 0 16 16" shape-rendering="crispEdges"><path d="M1 3 L7 3 M1 5.5 L7 5.5 M1 8 L7 8 M1 10.5 L7 10.5 M1 13 L7 13" stroke="#999" stroke-width="1.3"/><circle cx="11" cy="9" r="3.8" fill="#aaa"/><rect x="9.5" y="12.5" width="3" height="3" fill="#aaa"/></svg>
<svg style="left:712px;top:80px" width="16" height="16" viewBox="0 0 16 16" shape-rendering="crispEdges"><path d="M1 5 L7 5 M1 8 L7 8 M1 11 L7 11 M1 5 L1 11" stroke="#000" stroke-width="1.3"/><circle cx="11" cy="9" r="3.8" fill="#999" stroke="#000"/><rect x="9.5" y="12.5" width="3" height="3" fill="#fff" stroke="#000" stroke-width="0.8"/></svg>
<div class="bsep" style="left:737px;top:73px"></div>
<div class="bsep" style="left:832px;top:73px"></div>
<div class="grip" style="left:839px;top:80px"></div>
<svg style="left:850px;top:80px" width="16" height="16" viewBox="0 0 16 16" shape-rendering="crispEdges"><path d="M1 8 L5 3 L11 3 L15 8 L11 14 L5 14 Z" fill="#0ff" stroke="#00f" stroke-width="1"/><path d="M8 3 L8 14 M5 3 L8 7 L11 3" stroke="#000" fill="none"/></svg>
<svg style="left:873px;top:80px" width="16" height="16" viewBox="0 0 16 16" shape-rendering="crispEdges"><path d="M1 10 L5 6 L11 6 L15 10 L11 14 L5 14 Z" fill="#0ff" stroke="#00f" stroke-width="1"/><path d="M6 6 L6 3 L10 3 L10 6 M4 10 L12 10" stroke="#00f" fill="none"/><path d="M4 10 Q8 13 12 10" stroke="#000" fill="none"/></svg>
<svg style="left:896px;top:80px" width="16" height="16" viewBox="0 0 16 16" shape-rendering="crispEdges"><path d="M1 8 L15 8 L15 12 L3 12 Z" fill="#0ff" stroke="#000" stroke-width="1"/><path d="M6 8 L6 5 L10 5 L10 8" fill="#0ff" stroke="#00f"/></svg>
<svg style="left:919px;top:80px" width="16" height="16" viewBox="0 0 16 16" shape-rendering="crispEdges"><path d="M1 8 L15 8 L13 12 L1 12 Z" fill="#0ff" stroke="#000" stroke-width="1"/><path d="M6 8 L6 5 L10 5 L10 8" fill="#0ff" stroke="#00f"/></svg>
<svg style="left:942px;top:80px" width="16" height="16" viewBox="0 0 16 16" shape-rendering="crispEdges"><path d="M1 9 Q2 4 7 4 L12 4 L16 9 L12 13 L7 13 Q2 13 1 9 Z" fill="#0ff" stroke="#00f" stroke-width="1"/><rect x="8" y="6" width="4" height="5" fill="none" stroke="#000"/></svg>
<svg style="left:965px;top:80px" width="16" height="16" viewBox="0 0 16 16" shape-rendering="crispEdges"><path d="M1 8 Q4 4 10 4 L16 8 L10 12 Q4 12 1 8 Z" fill="#0ff" stroke="#00f" stroke-width="1"/><path d="M1 8 L16 8" stroke="#000"/></svg>
<div class="isep" style="left:987px;top:78px"></div>
<svg style="left:996px;top:80px" width="16" height="16" viewBox="0 0 16 16" shape-rendering="crispEdges"><path d="M1 8 L8 2 L15 8 L15 15 L2 15 L2 8 Z" fill="#f0f" stroke="#00f" stroke-width="1"/><path d="M1 8 L8 2 L15 8" stroke="#00f" stroke-width="2" fill="none"/><rect x="11" y="0" width="2" height="5" fill="#800"/><rect x="5" y="10" width="3" height="5" fill="#00f"/></svg>
<div class="bsep" style="left:1022px;top:73px"></div>
<div class="grip" style="left:1029px;top:80px"></div>
<svg style="left:1040px;top:80px" width="16" height="16" viewBox="0 0 16 16" shape-rendering="crispEdges"><path d="M1 4 L4 1 L15 12 L12 15 Z" fill="#0ff" stroke="#000" stroke-width="1"/><circle cx="13" cy="13" r="2.5" fill="#fff" stroke="#000"/><path d="M9 3 L15 3 M9 3 L11 1 M9 3 L11 5" stroke="#000"/></svg>
<div class="isep" style="left:1062px;top:78px"></div>
<svg style="left:1071px;top:80px" width="16" height="16" viewBox="0 0 16 16" shape-rendering="crispEdges"><circle cx="7" cy="7" r="5.5" fill="#fff" stroke="#000" stroke-width="1.3"/><path d="M11 11 L15 15" stroke="#0aa" stroke-width="2.5"/><rect x="4.5" y="4.5" width="5" height="5" fill="#999"/></svg>
<svg style="left:1094px;top:80px" width="16" height="16" viewBox="0 0 16 16" shape-rendering="crispEdges"><circle cx="7" cy="7" r="5.5" fill="#fff" stroke="#000" stroke-width="1.3"/><path d="M11 11 L15 15" stroke="#0aa" stroke-width="2.5"/><path d="M4 7 L10 7 M7 4 L7 10" stroke="#000" stroke-width="2"/></svg>
<svg style="left:1117px;top:80px" width="16" height="16" viewBox="0 0 16 16" shape-rendering="crispEdges"><circle cx="6" cy="7" r="5.5" fill="#fff" stroke="#000" stroke-width="1.3"/><path d="M10 11 L14 15" stroke="#0aa" stroke-width="2.5"/><path d="M14 1 L14 10 M12 3 L14 1 L16 3 M12 8 L14 10 L16 8" stroke="#000" fill="none"/></svg>
<svg style="left:1140px;top:80px" width="16" height="16" viewBox="0 0 16 16" shape-rendering="crispEdges"><circle cx="7" cy="7" r="5.5" fill="none" stroke="#aaa" stroke-width="1.3"/><path d="M11 11 L15 15" stroke="#aaa" stroke-width="2.5"/><path d="M4 6 L10 6 M4 8.5 L10 8.5" stroke="#aaa" stroke-width="1.3"/></svg>
<svg style="left:1163px;top:80px" width="16" height="16" viewBox="0 0 16 16" shape-rendering="crispEdges"><path d="M3 6 A6 6 0 0 1 13 4 M13 10 A6 6 0 0 1 3 12" stroke="#000" stroke-width="1.4" fill="none"/><path d="M11 2 L14 2 L14 6 Z M5 14 L2 14 L2 10 Z" fill="#000"/></svg>
<svg style="left:1186px;top:80px" width="16" height="16" viewBox="0 0 16 16" shape-rendering="crispEdges"><path d="M8 1 L8 15 M1 8 L15 8" stroke="#000" stroke-width="2"/><path d="M8 0 L11 3 L5 3 Z M8 16 L11 13 L5 13 Z M0 8 L3 5 L3 11 Z M16 8 L13 5 L13 11 Z" fill="#000"/></svg>
<div class="bsep" style="left:1212px;top:73px"></div>
<div class="bsep" style="left:1215px;top:73px"></div>
<div class="grip" style="left:1221px;top:80px"></div>
<svg style="left:1233px;top:80px" width="16" height="16" viewBox="0 0 16 16" shape-rendering="crispEdges"><path d="M1 5 L5 1 L15 1 L15 11 L11 15 L1 15 Z M1 5 L11 5 L15 1 M11 5 L11 15 M5 1 L5 11 L1 15 M5 11 L15 11" fill="none" stroke="#000" stroke-width="1.1"/></svg>
<div class="pb" style="left:1253px;top:78px"></div>
<svg style="left:1256px;top:80px" width="16" height="16" viewBox="0 0 16 16" shape-rendering="crispEdges"><path d="M1 5 L5 1 L15 1 L15 11 L11 15 L1 15 Z" fill="#0ff" stroke="#000" stroke-width="1"/><path d="M1 5 L11 5 L15 1 M11 5 L11 15" fill="none" stroke="#000" stroke-width="1"/><rect x="2" y="6" width="9" height="9" fill="#8ee"/></svg>
<svg style="left:1279px;top:80px" width="16" height="16" viewBox="0 0 16 16" shape-rendering="crispEdges"><path d="M1 4 L4 1 L12 1 L15 4 L15 15 L4 15 L1 12 Z" fill="#0cc"/><rect x="5" y="5" width="10" height="10" fill="#0ff" opacity="0.7"/></svg>
<svg style="left:1302px;top:80px" width="16" height="16" viewBox="0 0 16 16" shape-rendering="crispEdges"><path d="M1 4 L4 1 L12 2 L15 5 L15 15 L5 15 L1 12 Z" fill="#0ff" stroke="#000" stroke-width="1"/><path d="M1 4 L5 5 L15 5 M5 5 L5 15" stroke="#000" fill="none"/></svg>
<svg style="left:1325px;top:80px" width="16" height="16" viewBox="0 0 16 16" shape-rendering="crispEdges"><path d="M2 4 L9 1 L15 5 L10 15 L5 15 L2 9 Z" fill="#999"/></svg>
<svg style="left:1348px;top:80px" width="16" height="16" viewBox="0 0 16 16" shape-rendering="crispEdges"><rect x="1" y="3" width="15" height="10" fill="#fff" stroke="#000" stroke-width="1"/><path d="M1 11 L5 7 Q8 4 9 7 Q11 9 15 8" stroke="#f00" fill="none"/><path d="M12 16 L16 12 L16 16 Z" fill="#000"/></svg>
<div class="a" style="left:1375px;top:74px;width:1px;height:28px;background:#a6a6a6"></div>
<div class="a" style="left:0;top:103px;width:252px;height:926px;background:#fff"></div>
<div class="a" style="left:251px;top:103px;width:2px;height:926px;background:#6a6a6a"></div>
<div class="hdr" style="left:3px;top:105px;width:230px">Entities</div>
<svg style="left:238px;top:107px" width="7" height="7" viewBox="0 0 7 7"><path d="M0.5 0.5 L6.5 6.5 M6.5 0.5 L0.5 6.5" stroke="#000" stroke-width="1.8"/></svg>
<div class="a" style="left:3px;top:120px;width:244px;height:388px;background:#f0f0f0;border-top:2px solid #6e6e6e;border-left:2px solid #6e6e6e;border-right:1px solid #e3e3e3;border-bottom:1px solid #e3e3e3;box-shadow:inset 1px 1px 0 #a0a0a0"></div>
<div class="a" style="left:60px;top:126px;width:47px;height:19px;background:linear-gradient(#f2f2f2,#e4e4e4 50%,#d6d6d6);border:1px solid #8d8d8d;border-bottom:none"></div>
<div class="t" style="left:66px;top:130px;font-size:11px;letter-spacing:-0.3px">Children</div>
<div class="a" style="left:10px;top:124px;width:52px;height:22px;background:#fff;border:1px solid #8d8d8d;border-bottom:none"></div>
<div class="t" style="left:18px;top:128px;font-size:11px;letter-spacing:-0.3px">Parents</div>
<div class="a" style="left:10px;top:145px;width:236px;height:362px;background:#fff"></div>
<div class="a" style="left:229px;top:145px;width:17px;height:362px;background:linear-gradient(90deg,#e6e6e6,#f2f2f2 40%,#ececec)"></div>
<svg style="left:233px;top:150px" width="9" height="5" viewBox="0 0 9 5"><path d="M0.5 4.5 L4.5 0.5 L8.5 4.5 Z" fill="#404040"/></svg>
<svg style="left:233px;top:499px" width="9" height="5" viewBox="0 0 9 5"><path d="M0.5 0.5 L4.5 4.5 L8.5 0.5 Z" fill="#404040"/></svg>
<div class="a" style="left:230px;top:161px;width:14px;height:318px;border:1px solid #979797;border-radius:2px;background:linear-gradient(90deg,#f2f2f2,#e8e8e8 45%,#d4d4d4 55%,#cfcfcf)"></div>
<svg style="left:233px;top:316px" width="8" height="7" viewBox="0 0 8 7"><path d="M0 0.5 H8 M0 3.5 H8 M0 6.5 H8" stroke="#555" stroke-width="1"/></svg>
<svg style="left:0;top:0" width="0" height="0"><defs><pattern id="dith" width="2" height="2" patternUnits="userSpaceOnUse"><rect width="1" height="1" fill="#fff" opacity="0.55"/><rect x="1" y="1" width="1" height="1" fill="#fff" opacity="0.55"/></pattern><pattern id="dith2" width="2" height="2" patternUnits="userSpaceOnUse"><rect width="1" height="1" fill="#ccc"/></pattern></defs></svg>
<div class="a" style="left:10px;top:145px;width:219px;height:362px;overflow:hidden">
<div class="a" style="left:-10px;top:-145px;width:260px;height:520px"><div class="a" style="left:21px;top:157px;width:1px;height:350px;background:repeating-linear-gradient(#a0a0a0 0,#a0a0a0 1px,transparent 1px,transparent 2px)"></div>
<div class="a" style="left:22px;top:153px;width:10px;height:1px;background:repeating-linear-gradient(90deg,#a0a0a0 0,#a0a0a0 1px,transparent 1px,transparent 2px)"></div>
<svg style="left:32px;top:145px" width="16" height="16" viewBox="0 0 16 16" shape-rendering="crispEdges"><path d="M5 5 Q5 2 8 2 L11 2 L11 14 L8 14 Q5 14 5 11 Z" fill="#ff0" stroke="#000" stroke-width="1"/><path d="M1 8 L5 8 M11 5 L15 5 M11 11 L15 11" stroke="#000" stroke-width="2"/></svg>
<div class="tr" style="left:53px;top:147px">Components</div>
<div class="a" style="left:26px;top:169px;width:6px;height:1px;background:repeating-linear-gradient(90deg,#a0a0a0 0,#a0a0a0 1px,transparent 1px,transparent 2px)"></div>
<div class="a" style="left:18px;top:164px;width:9px;height:11px;background:#fff"></div>
<svg style="left:19px;top:166px" width="7" height="7" viewBox="0 0 7 7"><path d="M6 0.5 L6 6 L0.5 6 Z" fill="#404040"/></svg>
<svg style="left:32px;top:161px" width="16" height="16" viewBox="0 0 16 16" shape-rendering="crispEdges"><path d="M1 5 Q6 0 13 2 L15 5 Q11 9 9 15 Q3 12 1 8 Z" fill="#ff0" stroke="#000" stroke-width="1"/><path d="M5 2 L7 13 M9 2 L11 10 M2 7 L13 5" stroke="#999" stroke-width="0.9" fill="none"/></svg>
<div class="tr" style="left:53px;top:163px">Surfaces</div>
<div class="a" style="left:45px;top:185px;width:5px;height:1px;background:repeating-linear-gradient(90deg,#a0a0a0 0,#a0a0a0 1px,transparent 1px,transparent 2px)"></div>
<div class="a" style="left:37px;top:180px;width:9px;height:11px;background:#fff"></div>
<svg style="left:38px;top:181px" width="7" height="9" viewBox="0 0 7 9"><path d="M0.5 0.5 L5.5 4.5 L0.5 8.5 Z" fill="#fff" stroke="#a6a6a6"/></svg>
<svg style="left:50px;top:177px" width="16" height="16" viewBox="0 0 16 16" shape-rendering="crispEdges"><path d="M1 5 Q6 0 13 2 L15 5 Q11 9 9 15 Q3 12 1 8 Z" fill="#ff0" stroke="#000" stroke-width="1"/><path d="M5 2 L7 13 M9 2 L11 10 M2 7 L13 5" stroke="#999" stroke-width="0.9" fill="none"/></svg>
<div class="tr" style="left:72px;top:179px">s0</div>
<div class="a" style="left:26px;top:201px;width:6px;height:1px;background:repeating-linear-gradient(90deg,#a0a0a0 0,#a0a0a0 1px,transparent 1px,transparent 2px)"></div>
<div class="a" style="left:18px;top:196px;width:9px;height:11px;background:#fff"></div>
<svg style="left:19px;top:197px" width="7" height="9" viewBox="0 0 7 9"><path d="M0.5 0.5 L5.5 4.5 L0.5 8.5 Z" fill="#fff" stroke="#a6a6a6"/></svg>
<svg style="left:32px;top:193px" width="16" height="16" viewBox="0 0 16 16" shape-rendering="crispEdges"><rect x="1" y="1" width="14" height="14" fill="#ffff66"/><rect x="1" y="1" width="14" height="14" fill="url(#dith)"/><path d="M1 14 Q3 6 6 9 Q9 12 13 2" fill="none" stroke="#000" stroke-width="1.4"/></svg>
<div class="tr" style="left:53px;top:195px">Curves</div>
<div class="a" style="left:26px;top:217px;width:6px;height:1px;background:repeating-linear-gradient(90deg,#a0a0a0 0,#a0a0a0 1px,transparent 1px,transparent 2px)"></div>
<div class="a" style="left:18px;top:212px;width:9px;height:11px;background:#fff"></div>
<svg style="left:19px;top:213px" width="7" height="9" viewBox="0 0 7 9"><path d="M0.5 0.5 L5.5 4.5 L0.5 8.5 Z" fill="#fff" stroke="#a6a6a6"/></svg>
<svg style="left:32px;top:209px" width="16" height="16" viewBox="0 0 16 16" shape-rendering="crispEdges"><rect x="1" y="1" width="14" height="14" fill="#ffff66"/><rect x="1" y="1" width="14" height="14" fill="url(#dith)"/><path d="M3 3 L13 13 M13 3 L3 13" stroke="#000" stroke-width="1"/></svg>
<div class="tr" style="left:53px;top:211px">Points</div>
<div class="a" style="left:22px;top:233px;width:10px;height:1px;background:repeating-linear-gradient(90deg,#a0a0a0 0,#a0a0a0 1px,transparent 1px,transparent 2px)"></div>
<svg style="left:32px;top:225px" width="16" height="16" viewBox="0 0 16 16" shape-rendering="crispEdges"><path d="M8 2 L15 8 L8 15 L1 8 Z" fill="#ffff88" stroke="#ccc"/><path d="M1 0 L15 15" stroke="#000" stroke-width="1" stroke-dasharray="2 2"/></svg>
<div class="tr" style="left:53px;top:227px">Planes</div>
<div class="a" style="left:22px;top:249px;width:10px;height:1px;background:repeating-linear-gradient(90deg,#a0a0a0 0,#a0a0a0 1px,transparent 1px,transparent 2px)"></div>
<svg style="left:32px;top:241px" width="16" height="16" viewBox="0 0 16 16" shape-rendering="crispEdges"><rect x="1" y="1" width="14" height="14" fill="#ffff66"/><rect x="1" y="1" width="14" height="14" fill="url(#dith)"/><path d="M2 2 L2 14 L14 14 M2 14 L11 5" stroke="#000" stroke-width="1" fill="none"/></svg>
<div class="tr" style="left:53px;top:243px">Frames</div>
<div class="a" style="left:22px;top:265px;width:10px;height:1px;background:repeating-linear-gradient(90deg,#a0a0a0 0,#a0a0a0 1px,transparent 1px,transparent 2px)"></div>
<svg style="left:32px;top:257px" width="16" height="16" viewBox="0 0 16 16" shape-rendering="crispEdges"><rect x="1" y="1" width="14" height="14" fill="#ff0" stroke="#000" stroke-width="1"/><path d="M1 1 L15 15 M15 1 L1 15 M8 1 L8 15 M1 8 L15 8" stroke="#999" stroke-width="0.7"/></svg>
<div class="tr" style="left:53px;top:259px">Triangle Meshes</div>
<div class="a" style="left:22px;top:281px;width:10px;height:1px;background:repeating-linear-gradient(90deg,#a0a0a0 0,#a0a0a0 1px,transparent 1px,transparent 2px)"></div>
<svg style="left:32px;top:273px" width="16" height="16" viewBox="0 0 16 16" shape-rendering="crispEdges"><rect x="1" y="1" width="14" height="14" fill="url(#dith2)"/><path d="M1 2 L8 2 L8 12 L1 12 Z" fill="#ff0"/><path d="M1 15 L7 15 M5 15 L14 2" stroke="#000" stroke-width="1"/><path d="M8 11 L14 3" stroke="#f0f" stroke-width="2.5"/></svg>
<div class="tr" style="left:53px;top:275px">Wireframes</div>
<div class="a" style="left:26px;top:297px;width:6px;height:1px;background:repeating-linear-gradient(90deg,#a0a0a0 0,#a0a0a0 1px,transparent 1px,transparent 2px)"></div>
<div class="a" style="left:18px;top:292px;width:9px;height:11px;background:#fff"></div>
<svg style="left:19px;top:294px" width="7" height="7" viewBox="0 0 7 7"><path d="M6 0.5 L6 6 L0.5 6 Z" fill="#404040"/></svg>
<svg style="left:32px;top:289px" width="16" height="16" viewBox="0 0 16 16" shape-rendering="crispEdges"><path d="M1 5 Q4 1 8 2 Q13 1 15 5 L14 14 L9 13 L5 15 L2 14 L2 9 Q0 7 1 5 Z" fill="#ff0" stroke="#000" stroke-width="1"/><path d="M5 3 L5 14 M8 3 L8 13 M11 3 L11 13" stroke="#f0f" stroke-width="1.3"/></svg>
<div class="tr" style="left:53px;top:291px">Contours</div>
<div class="a" style="left:45px;top:313px;width:5px;height:1px;background:repeating-linear-gradient(90deg,#a0a0a0 0,#a0a0a0 1px,transparent 1px,transparent 2px)"></div>
<div class="a" style="left:37px;top:308px;width:9px;height:11px;background:#fff"></div>
<svg style="left:38px;top:309px" width="7" height="9" viewBox="0 0 7 9"><path d="M0.5 0.5 L5.5 4.5 L0.5 8.5 Z" fill="#fff" stroke="#a6a6a6"/></svg>
<svg style="left:50px;top:305px" width="16" height="16" viewBox="0 0 16 16" shape-rendering="crispEdges"><path d="M1 5 Q4 1 8 2 Q13 1 15 5 L14 12 L9 13 L5 15 L2 14 L2 9 Q0 7 1 5 Z" fill="#ff0" stroke="#000" stroke-width="1"/><path d="M5 3 L5 14 M8 3 L8 13 M11 3 L11 12" stroke="#f0f" stroke-width="1.3"/><circle cx="12.5" cy="12.5" r="2.5" fill="#888" stroke="#000" stroke-width="0.8"/><path d="M12.5 15 L12.5 17" stroke="#000" stroke-width="1.3"/></svg>
<div class="tr" style="left:72px;top:307px">X0</div>
<div class="a" style="left:45px;top:329px;width:5px;height:1px;background:repeating-linear-gradient(90deg,#a0a0a0 0,#a0a0a0 1px,transparent 1px,transparent 2px)"></div>
<div class="a" style="left:37px;top:324px;width:9px;height:11px;background:#fff"></div>
<svg style="left:38px;top:325px" width="7" height="9" viewBox="0 0 7 9"><path d="M0.5 0.5 L5.5 4.5 L0.5 8.5 Z" fill="#fff" stroke="#a6a6a6"/></svg>
<svg style="left:50px;top:321px" width="16" height="16" viewBox="0 0 16 16" shape-rendering="crispEdges"><path d="M1 5 Q4 1 8 2 Q13 1 15 5 L14 12 L9 13 L5 15 L2 14 L2 9 Q0 7 1 5 Z" fill="#ff0" stroke="#000" stroke-width="1"/><path d="M5 3 L5 14 M8 3 L8 13 M11 3 L11 12" stroke="#f0f" stroke-width="1.3"/><circle cx="12.5" cy="12.5" r="2.5" fill="#888" stroke="#000" stroke-width="0.8"/><path d="M12.5 15 L12.5 17" stroke="#000" stroke-width="1.3"/></svg>
<div class="tr" style="left:72px;top:323px">X1</div>
<div class="a" style="left:22px;top:345px;width:10px;height:1px;background:repeating-linear-gradient(90deg,#a0a0a0 0,#a0a0a0 1px,transparent 1px,transparent 2px)"></div>
<svg style="left:32px;top:337px" width="16" height="16" viewBox="0 0 16 16" shape-rendering="crispEdges"><path d="M1 5 L5 1 L15 1 L15 11 L11 15 L1 15 Z" fill="#ff0" stroke="#000" stroke-width="1"/><path d="M1 5 L11 5 L15 1 M11 5 L11 15" stroke="#000" stroke-width="1" fill="none"/></svg>
<div class="tr" style="left:53px;top:339px">Solids</div>
<div class="a" style="left:22px;top:361px;width:10px;height:1px;background:repeating-linear-gradient(90deg,#a0a0a0 0,#a0a0a0 1px,transparent 1px,transparent 2px)"></div>
<svg style="left:32px;top:353px" width="16" height="16" viewBox="0 0 16 16" shape-rendering="crispEdges"><path d="M2 2 L7 4 L9 1 L15 3 L13 8 L15 13 L9 15 L7 12 L2 14 L4 8 Z" fill="#ff0" stroke="#000" stroke-width="1"/><path d="M4 8 L13 8 M8 1 L8 15 M3 3 L13 13" stroke="#999" stroke-width="0.8"/></svg>
<div class="tr" style="left:53px;top:355px">Composite Surfaces</div>
<div class="a" style="left:22px;top:377px;width:10px;height:1px;background:repeating-linear-gradient(90deg,#a0a0a0 0,#a0a0a0 1px,transparent 1px,transparent 2px)"></div>
<svg style="left:32px;top:369px" width="16" height="16" viewBox="0 0 16 16" shape-rendering="crispEdges"><rect x="1" y="1" width="14" height="14" fill="#ffff66"/><rect x="1" y="1" width="14" height="14" fill="url(#dith)"/><path d="M2 13 L2 10 L5 5 L8 2 M8 2 L10 4 L12 2 L15 3" stroke="#f00" stroke-width="1" fill="none"/><circle cx="2" cy="14" r="1.6" fill="#f00"/></svg>
<div class="tr" style="left:53px;top:371px">Relabels</div>
<div class="a" style="left:22px;top:393px;width:10px;height:1px;background:repeating-linear-gradient(90deg,#a0a0a0 0,#a0a0a0 1px,transparent 1px,transparent 2px)"></div>
<svg style="left:32px;top:385px" width="16" height="16" viewBox="0 0 16 16" shape-rendering="crispEdges"><rect x="1" y="1" width="14" height="14" fill="#ffff66"/><rect x="1" y="1" width="14" height="14" fill="url(#dith)"/><rect x="1" y="4" width="14" height="8" fill="#fff" stroke="#000" stroke-width="1"/><path d="M2 11 Q8 4 14 11 M2 8 Q8 12 14 8" stroke="#00f" fill="none" stroke-width="0.9"/></svg>
<div class="tr" style="left:53px;top:387px">Graphs</div>
<div class="a" style="left:22px;top:409px;width:10px;height:1px;background:repeating-linear-gradient(90deg,#a0a0a0 0,#a0a0a0 1px,transparent 1px,transparent 2px)"></div>
<svg style="left:32px;top:401px" width="16" height="16" viewBox="0 0 16 16" shape-rendering="crispEdges"><rect x="1" y="1" width="14" height="14" fill="#ffff66"/><rect x="1" y="1" width="14" height="14" fill="url(#dith)"/><path d="M7 2 h2 M4 6 h1 M2 9 h1 M12 2 h2 M12 5 L13 5 L13 9" stroke="#000" stroke-width="1.6"/><path d="M1 12 h3 v3 h-3 Z" fill="none" stroke="#000" stroke-width="1"/></svg>
<div class="tr" style="left:53px;top:403px">Knotlists</div>
<div class="a" style="left:22px;top:425px;width:10px;height:1px;background:repeating-linear-gradient(90deg,#a0a0a0 0,#a0a0a0 1px,transparent 1px,transparent 2px)"></div>
<svg style="left:32px;top:417px" width="16" height="16" viewBox="0 0 16 16" shape-rendering="crispEdges"><rect x="1" y="1" width="14" height="14" fill="#ffff66"/><rect x="1" y="1" width="14" height="14" fill="url(#dith)"/><path d="M1 5 L6 11 M6 5 L1 11 M8 6 L15 6 M8 10 L15 10" stroke="#000" stroke-width="1.7"/></svg>
<div class="tr" style="left:53px;top:419px">Variables &amp; Formulas</div>
<div class="a" style="left:22px;top:441px;width:10px;height:1px;background:repeating-linear-gradient(90deg,#a0a0a0 0,#a0a0a0 1px,transparent 1px,transparent 2px)"></div>
<svg style="left:32px;top:433px" width="16" height="16" viewBox="0 0 16 16" shape-rendering="crispEdges"><rect x="1" y="1" width="14" height="14" fill="#ffff66"/><rect x="1" y="1" width="14" height="14" fill="url(#dith)"/><path d="M1 15 L8 1 L15 15 M4 10 L12 10" stroke="#000" stroke-width="2.4" fill="none"/></svg>
<div class="tr" style="left:53px;top:435px">Text Labels</div>
<div class="a" style="left:22px;top:457px;width:10px;height:1px;background:repeating-linear-gradient(90deg,#a0a0a0 0,#a0a0a0 1px,transparent 1px,transparent 2px)"></div>
<svg style="left:32px;top:449px" width="16" height="16" viewBox="0 0 16 16" shape-rendering="crispEdges"><rect x="1" y="1" width="14" height="14" fill="#ffff66"/><rect x="1" y="1" width="14" height="14" fill="url(#dith)"/><path d="M2 6 L14 5 M2 11 L14 10" stroke="#000" stroke-width="2.2"/></svg>
<div class="tr" style="left:53px;top:451px">Solve Sets</div>
<div class="a" style="left:22px;top:473px;width:10px;height:1px;background:repeating-linear-gradient(90deg,#a0a0a0 0,#a0a0a0 1px,transparent 1px,transparent 2px)"></div>
<svg style="left:32px;top:465px" width="16" height="16" viewBox="0 0 16 16" shape-rendering="crispEdges"><rect x="1" y="1" width="14" height="14" fill="#ffff66"/><rect x="1" y="1" width="14" height="14" fill="url(#dith)"/><rect x="2.5" y="2.5" width="11" height="11" fill="#fff" stroke="#000" stroke-width="1"/><path d="M4 5.5 H12 M4 7.5 H12 M4 9.5 H12 M4 11.5 H12" stroke="#000" stroke-width="1"/></svg>
<div class="tr" style="left:53px;top:467px">Entity Lists</div>
<div class="a" style="left:26px;top:489px;width:6px;height:1px;background:repeating-linear-gradient(90deg,#a0a0a0 0,#a0a0a0 1px,transparent 1px,transparent 2px)"></div>
<div class="a" style="left:18px;top:484px;width:9px;height:11px;background:#fff"></div>
<svg style="left:19px;top:485px" width="7" height="9" viewBox="0 0 7 9"><path d="M0.5 0.5 L5.5 4.5 L0.5 8.5 Z" fill="#fff" stroke="#a6a6a6"/></svg>
<svg style="left:32px;top:481px" width="16" height="16" viewBox="0 0 16 16" shape-rendering="crispEdges"><path d="M8 0 L9.5 5 L14 2 L11 6.5 L16 8 L11 9.5 L14 14 L9.5 11 L8 16 L6.5 11 L2 14 L5 9.5 L0 8 L5 6.5 L2 2 L6.5 5 Z" fill="#ff0" stroke="#000" stroke-width="1"/></svg>
<div class="tr" style="left:53px;top:483px">System</div>
<div class="a" style="left:22px;top:505px;width:10px;height:1px;background:repeating-linear-gradient(90deg,#a0a0a0 0,#a0a0a0 1px,transparent 1px,transparent 2px)"></div>
<svg style="left:32px;top:497px" width="16" height="16" viewBox="0 0 16 16" shape-rendering="crispEdges"><path d="M2.5 3 V16 M2 12.5 H15" stroke="#000" stroke-width="1.5"/><rect x="1" y="1" width="3" height="3" fill="#080"/><rect x="5" y="4" width="3" height="3" fill="#080"/><rect x="8" y="11" width="3" height="3" fill="#080"/><rect x="13" y="11" width="3" height="3" fill="#f00"/></svg>
<div class="tr" style="left:53px;top:499px">No Dependents</div></div></div>
<div class="a" style="left:0;top:512px;width:251px;height:1px;background:#a0a0a0"></div>
<div class="hdr" style="left:3px;top:515px;width:230px">Properties</div>
<svg style="left:238px;top:519px" width="7" height="7" viewBox="0 0 7 7"><path d="M0.5 0.5 L6.5 6.5 M6.5 0.5 L0.5 6.5" stroke="#000" stroke-width="1.8"/></svg>
<div class="a" style="left:3px;top:529px;width:244px;height:296px;background:#f0f0f0;border-top:2px solid #6e6e6e;border-left:2px solid #6e6e6e;border-right:1px solid #e3e3e3;border-bottom:1px solid #e3e3e3;box-shadow:inset 1px 1px 0 #a0a0a0"></div>
<div class="a" style="left:5px;top:547px;width:240px;height:1px;background:#8e8e8e"></div>
<div class="a" style="left:5px;top:548px;width:240px;height:1px;background:#fff"></div>
<div class="a" style="left:228px;top:531px;width:15px;height:16px;background:#f0f0f0;border-right:1px solid #808080;border-bottom:1px solid #808080;box-shadow:inset -1px -1px 0 #b0b0b0"></div>
<svg style="left:231px;top:533px" width="8" height="11" viewBox="0 0 8 11"><path d="M1 3.5 Q1 0.5 4 0.5 Q7 0.5 7 3.5 Q7 5 5 6 L5 7.5 L3 7.5 L3 5 Q5 4.5 5 3.5 Q5 2.5 4 2.5 Q3 2.5 3 3.5 Z M3 8.5 L5 8.5 L5 10.5 L3 10.5 Z" fill="#ff0" stroke="#000" stroke-width="1"/></svg>
<div class="a" style="left:0;top:831px;width:251px;height:1px;background:#a0a0a0"></div>
<div class="hdr" style="left:3px;top:834px;width:230px">Selection Set</div>
<svg style="left:238px;top:838px" width="7" height="7" viewBox="0 0 7 7"><path d="M0.5 0.5 L6.5 6.5 M6.5 0.5 L0.5 6.5" stroke="#000" stroke-width="1.8"/></svg>
<div class="a" style="left:3px;top:848px;width:244px;height:177px;background:#f0f0f0;border-top:2px solid #6e6e6e;border-left:2px solid #6e6e6e;border-right:1px solid #e3e3e3;border-bottom:1px solid #e3e3e3;box-shadow:inset 1px 1px 0 #a0a0a0"></div>
<div class="a" style="left:11px;top:853px;width:21px;height:19px;border:1px solid #6e6e6e;border-radius:3px;background:linear-gradient(#f6f6f6,#e2e2e2)"></div>
<div class="a" style="left:35px;top:853px;width:21px;height:19px;border:1px solid #b4b4b4;border-radius:3px;background:linear-gradient(#f6f6f6,#e2e2e2)"></div>
<div class="a" style="left:59px;top:853px;width:21px;height:19px;border:1px solid #b4b4b4;border-radius:3px;background:linear-gradient(#f6f6f6,#e2e2e2)"></div>
<div class="a" style="left:83px;top:853px;width:21px;height:19px;border:1px solid #b4b4b4;border-radius:3px;background:linear-gradient(#f6f6f6,#e2e2e2)"></div>
<div class="a" style="left:107px;top:853px;width:21px;height:19px;border:1px solid #b4b4b4;border-radius:3px;background:linear-gradient(#f6f6f6,#e2e2e2)"></div>
<svg style="left:14px;top:855px" width="16" height="15" viewBox="0 0 16 15" shape-rendering="crispEdges"><rect x="1" y="1" width="9" height="13" fill="#fff" stroke="#000"/><path d="M3 4 L8 4 M3 6 L8 6 M3 8 L8 8 M3 10 L8 10 M3 12 L8 12" stroke="#000"/><path d="M13 1 L13 14 M11 3 L13 1 L15 3 M11 12 L13 14 L15 12" stroke="#000" fill="none"/></svg>
<svg style="left:37px;top:855px" width="16" height="15" viewBox="0 0 16 15" shape-rendering="crispEdges"><path d="M8 2 L13 7 L10 7 L10 13 L6 13 L6 7 L3 7 Z" fill="#888"/></svg>
<svg style="left:61px;top:855px" width="16" height="15" viewBox="0 0 16 15" shape-rendering="crispEdges"><path d="M8 13 L13 8 L10 8 L10 2 L6 2 L6 8 L3 8 Z" fill="#888"/></svg>
<svg style="left:85px;top:855px" width="16" height="15" viewBox="0 0 16 15" shape-rendering="crispEdges"><path d="M2 2 L14 13 M14 2 L2 13" stroke="#c06060" stroke-width="1.4"/></svg>
<svg style="left:109px;top:855px" width="16" height="15" viewBox="0 0 16 15" shape-rendering="crispEdges"><rect x="2" y="1" width="12" height="13" fill="#eee" stroke="#888"/><rect x="2" y="1" width="12" height="2" fill="#8080ff"/><path d="M4 5 L12 5 M4 8 L12 8 M4 11 L12 11" stroke="#999"/><path d="M3 3 L13 13 M13 3 L3 13" stroke="#c06060" stroke-width="1.4"/></svg>
<div class="t" style="left:133px;top:857px;font-size:11px;letter-spacing:-0.2px">0 Entities</div>
<div class="a" style="left:10px;top:874px;width:236px;height:151px;background:#fff;border:1px solid #828790;border-bottom:none"></div>
<div class="a" style="left:12px;top:876px;width:221px;height:24px;background:#f0f0f0"></div>
<div class="t" style="left:18px;top:882px;font-size:11px;letter-spacing:-0.2px">Name</div>
<div class="t" style="left:162px;top:882px;font-size:11px;letter-spacing:-0.2px">Type</div>
<div class="a" style="left:12px;top:1010px;width:231px;height:15px;background:#ececec"></div>
<svg style="left:18px;top:1013px" width="5" height="9" viewBox="0 0 5 9"><path d="M4.5 0.5 L0.5 4.5 L4.5 8.5 Z" fill="#404040"/></svg>
<svg style="left:232px;top:1013px" width="5" height="9" viewBox="0 0 5 9"><path d="M0.5 0.5 L4.5 4.5 L0.5 8.5 Z" fill="#404040"/></svg>
<div class="a" style="left:30px;top:1010px;width:116px;height:14px;border:1px solid #979797;border-radius:2px;background:linear-gradient(#f4f4f4,#e6e6e6 45%,#d2d2d2 55%,#cacaca)"></div>
<svg style="left:84px;top:1013px" width="7" height="8" viewBox="0 0 7 8"><path d="M0.5 0 V8 M3.5 0 V8 M6.5 0 V8" stroke="#555"/></svg>
<div class="a" style="left:253px;top:103px;width:1146px;height:927px;background:#fff"></div>
<div class="a" style="left:253px;top:103px;width:1145px;height:926px;background:#8080ff"></div>
<svg style="left:0;top:0" width="1400" height="1050" viewBox="0 0 1400 1050">
<defs>
<clipPath id="vc"><rect x="253" y="103" width="1145" height="926"/></clipPath>
<clipPath id="sc"><path d="M352.0 582.0 C356.2 584.5 368.7 591.8 377.0 597.0 C385.3 602.2 392.7 607.3 402.0 613.0 C411.3 618.7 423.3 625.7 433.0 631.0 C442.7 636.3 450.8 641.0 460.0 645.0 C469.2 649.0 478.8 652.4 488.0 655.0 C497.2 657.6 506.3 659.3 515.0 660.5 C523.7 661.7 530.8 661.9 540.0 662.0 C549.2 662.1 560.0 661.7 570.0 661.0 C580.0 660.3 585.0 659.8 600.0 658.0 C615.0 656.2 643.3 652.5 660.0 650.0 C676.7 647.5 683.3 646.2 700.0 643.0 C716.7 639.8 740.0 635.3 760.0 631.0 C780.0 626.7 800.0 621.8 820.0 617.0 C840.0 612.2 860.0 606.8 880.0 602.0 C900.0 597.2 923.3 592.2 940.0 588.0 C956.7 583.8 967.7 580.5 980.0 577.0 C992.3 573.5 1002.5 571.3 1014.0 567.0 C1025.5 562.7 1039.0 556.0 1049.0 551.4 C1059.0 546.8 1067.2 543.4 1074.0 539.4 C1080.8 535.4 1085.7 531.4 1090.0 527.4 C1094.3 523.4 1097.5 520.0 1100.0 515.4 C1102.5 510.8 1104.0 505.4 1105.0 500.0 C1106.0 494.6 1106.3 488.2 1106.0 483.0 C1105.7 477.8 1104.7 473.9 1103.4 469.0 C1102.1 464.1 1100.3 458.5 1098.3 453.7 C1096.3 448.9 1094.7 445.1 1091.4 440.0 C1088.1 434.9 1083.8 428.8 1078.6 423.0 C1073.4 417.2 1067.9 412.3 1060.0 405.0 C1052.1 397.7 1040.7 386.3 1031.0 379.0 C1021.3 371.7 1006.8 364.0 1002.0 361.0 L1002.0 361.0 C1006.7 361.2 1020.3 361.6 1030.0 362.0 C1039.7 362.4 1047.8 362.8 1060.0 363.6 C1072.2 364.4 1087.8 365.4 1103.0 367.0 C1118.2 368.6 1136.7 371.0 1151.0 373.0 C1165.3 375.0 1179.7 377.5 1189.0 379.0 C1198.3 380.5 1201.2 380.5 1207.0 382.0 C1212.8 383.5 1218.7 386.1 1224.0 388.0 C1229.3 389.9 1234.8 391.3 1238.6 393.6 C1242.4 395.9 1244.6 399.7 1247.0 401.6 C1249.4 403.5 1250.5 403.4 1253.0 405.0 C1255.5 406.6 1258.7 408.4 1262.0 411.0 C1265.3 413.6 1268.8 416.8 1273.0 420.5 C1277.2 424.2 1283.6 429.8 1287.0 433.4 C1290.4 437.0 1291.6 438.8 1293.5 442.0 C1295.4 445.2 1297.2 449.1 1298.6 452.5 C1299.9 455.9 1301.0 459.1 1301.6 462.4 C1302.2 465.6 1302.1 468.6 1302.0 472.0 C1301.9 475.4 1301.8 479.5 1301.0 483.0 C1300.2 486.5 1299.5 488.7 1297.0 493.0 C1294.5 497.3 1292.2 502.7 1286.0 508.6 C1279.8 514.5 1266.8 523.7 1260.0 528.6 C1253.2 533.5 1255.3 532.9 1245.0 538.0 C1234.7 543.1 1213.8 552.7 1198.0 559.5 C1182.2 566.3 1169.2 571.8 1150.0 578.6 C1130.8 585.4 1109.7 592.7 1083.0 600.3 C1056.3 607.9 1020.5 616.4 990.0 624.0 C959.5 631.6 928.3 639.3 900.0 646.0 C871.7 652.7 846.7 658.4 820.0 664.4 C793.3 670.4 766.7 676.1 740.0 682.0 C713.3 687.9 683.3 694.3 660.0 699.5 C636.7 704.7 616.3 709.8 600.0 713.0 C583.7 716.2 575.3 716.8 562.0 719.0 C548.7 721.2 532.4 724.5 520.0 726.0 C507.6 727.5 499.2 728.4 487.5 728.0 C475.8 727.6 462.9 726.6 450.0 723.8 C437.1 720.9 422.7 715.7 410.0 710.7 C397.3 705.7 387.2 700.1 374.0 693.6 C360.8 687.1 347.5 681.1 331.0 671.7 C314.5 662.3 284.3 642.8 275.0 637.0 C275.1 635.3 274.4 631.0 275.7 627.0 C277.0 623.0 279.9 616.8 283.0 613.0 C286.1 609.2 288.3 607.6 294.0 604.3 C299.7 601.0 310.3 595.9 317.0 593.0 C323.7 590.1 328.2 588.8 334.0 587.0 C339.8 585.2 349.0 582.8 352.0 582.0Z"/></clipPath>
<filter id="bl8" x="-50%" y="-50%" width="200%" height="200%"><feGaussianBlur stdDeviation="8"/></filter>
<filter id="bl10" x="-50%" y="-50%" width="200%" height="200%"><feGaussianBlur stdDeviation="10"/></filter>
<filter id="bl15" x="-50%" y="-50%" width="200%" height="200%"><feGaussianBlur stdDeviation="15"/></filter>
<linearGradient id="hookg" x1="0" y1="0" x2="0" y2="1"><stop offset="0" stop-color="#32609a"/><stop offset="0.45" stop-color="#3578b3"/><stop offset="1" stop-color="#3a88c2"/></linearGradient>
</defs>
<g clip-path="url(#vc)">
<path d="M352.0 582.0 C356.2 584.5 368.7 591.8 377.0 597.0 C385.3 602.2 392.7 607.3 402.0 613.0 C411.3 618.7 423.3 625.7 433.0 631.0 C442.7 636.3 450.8 641.0 460.0 645.0 C469.2 649.0 478.8 652.4 488.0 655.0 C497.2 657.6 506.3 659.3 515.0 660.5 C523.7 661.7 530.8 661.9 540.0 662.0 C549.2 662.1 560.0 661.7 570.0 661.0 C580.0 660.3 585.0 659.8 600.0 658.0 C615.0 656.2 643.3 652.5 660.0 650.0 C676.7 647.5 683.3 646.2 700.0 643.0 C716.7 639.8 740.0 635.3 760.0 631.0 C780.0 626.7 800.0 621.8 820.0 617.0 C840.0 612.2 860.0 606.8 880.0 602.0 C900.0 597.2 923.3 592.2 940.0 588.0 C956.7 583.8 967.7 580.5 980.0 577.0 C992.3 573.5 1002.5 571.3 1014.0 567.0 C1025.5 562.7 1039.0 556.0 1049.0 551.4 C1059.0 546.8 1067.2 543.4 1074.0 539.4 C1080.8 535.4 1085.7 531.4 1090.0 527.4 C1094.3 523.4 1097.5 520.0 1100.0 515.4 C1102.5 510.8 1104.0 505.4 1105.0 500.0 C1106.0 494.6 1106.3 488.2 1106.0 483.0 C1105.7 477.8 1104.7 473.9 1103.4 469.0 C1102.1 464.1 1100.3 458.5 1098.3 453.7 C1096.3 448.9 1094.7 445.1 1091.4 440.0 C1088.1 434.9 1083.8 428.8 1078.6 423.0 C1073.4 417.2 1067.9 412.3 1060.0 405.0 C1052.1 397.7 1040.7 386.3 1031.0 379.0 C1021.3 371.7 1006.8 364.0 1002.0 361.0 L1002.0 361.0 C1006.7 361.2 1020.3 361.6 1030.0 362.0 C1039.7 362.4 1047.8 362.8 1060.0 363.6 C1072.2 364.4 1087.8 365.4 1103.0 367.0 C1118.2 368.6 1136.7 371.0 1151.0 373.0 C1165.3 375.0 1179.7 377.5 1189.0 379.0 C1198.3 380.5 1201.2 380.5 1207.0 382.0 C1212.8 383.5 1218.7 386.1 1224.0 388.0 C1229.3 389.9 1234.8 391.3 1238.6 393.6 C1242.4 395.9 1244.6 399.7 1247.0 401.6 C1249.4 403.5 1250.5 403.4 1253.0 405.0 C1255.5 406.6 1258.7 408.4 1262.0 411.0 C1265.3 413.6 1268.8 416.8 1273.0 420.5 C1277.2 424.2 1283.6 429.8 1287.0 433.4 C1290.4 437.0 1291.6 438.8 1293.5 442.0 C1295.4 445.2 1297.2 449.1 1298.6 452.5 C1299.9 455.9 1301.0 459.1 1301.6 462.4 C1302.2 465.6 1302.1 468.6 1302.0 472.0 C1301.9 475.4 1301.8 479.5 1301.0 483.0 C1300.2 486.5 1299.5 488.7 1297.0 493.0 C1294.5 497.3 1292.2 502.7 1286.0 508.6 C1279.8 514.5 1266.8 523.7 1260.0 528.6 C1253.2 533.5 1255.3 532.9 1245.0 538.0 C1234.7 543.1 1213.8 552.7 1198.0 559.5 C1182.2 566.3 1169.2 571.8 1150.0 578.6 C1130.8 585.4 1109.7 592.7 1083.0 600.3 C1056.3 607.9 1020.5 616.4 990.0 624.0 C959.5 631.6 928.3 639.3 900.0 646.0 C871.7 652.7 846.7 658.4 820.0 664.4 C793.3 670.4 766.7 676.1 740.0 682.0 C713.3 687.9 683.3 694.3 660.0 699.5 C636.7 704.7 616.3 709.8 600.0 713.0 C583.7 716.2 575.3 716.8 562.0 719.0 C548.7 721.2 532.4 724.5 520.0 726.0 C507.6 727.5 499.2 728.4 487.5 728.0 C475.8 727.6 462.9 726.6 450.0 723.8 C437.1 720.9 422.7 715.7 410.0 710.7 C397.3 705.7 387.2 700.1 374.0 693.6 C360.8 687.1 347.5 681.1 331.0 671.7 C314.5 662.3 284.3 642.8 275.0 637.0 C275.1 635.3 274.4 631.0 275.7 627.0 C277.0 623.0 279.9 616.8 283.0 613.0 C286.1 609.2 288.3 607.6 294.0 604.3 C299.7 601.0 310.3 595.9 317.0 593.0 C323.7 590.1 328.2 588.8 334.0 587.0 C339.8 585.2 349.0 582.8 352.0 582.0Z" fill="#3783bd"/>
<g clip-path="url(#sc)">
<rect x="990" y="355" width="320" height="210" fill="url(#hookg)"/>
<g filter="url(#bl8)">
<path d="M352.0 582.0 C356.2 584.5 368.7 591.8 377.0 597.0 C385.3 602.2 392.7 607.3 402.0 613.0 C411.3 618.7 423.3 625.7 433.0 631.0 C442.7 636.3 450.8 641.0 460.0 645.0 C469.2 649.0 478.8 652.4 488.0 655.0 C497.2 657.6 506.3 659.3 515.0 660.5 C523.7 661.7 530.8 661.9 540.0 662.0 C549.2 662.1 565.0 661.2 570.0 661.0" fill="none" stroke="#33659b" stroke-width="26"/>
<path d="M570.0 661.0 C575.0 660.5 585.0 659.8 600.0 658.0 C615.0 656.2 643.3 652.5 660.0 650.0 C676.7 647.5 683.3 646.2 700.0 643.0 C716.7 639.8 740.0 635.3 760.0 631.0 C780.0 626.7 800.0 621.8 820.0 617.0 C840.0 612.2 860.0 606.8 880.0 602.0 C900.0 597.2 923.3 592.2 940.0 588.0 C956.7 583.8 973.3 578.8 980.0 577.0" fill="none" stroke="#33659b" stroke-width="10"/>
<path d="M410.0 710.7 C404.0 707.9 387.2 700.1 374.0 693.6 C360.8 687.1 347.5 681.1 331.0 671.7 C314.5 662.3 284.3 642.8 275.0 637.0" fill="none" stroke="#32528c" stroke-width="22"/>
<path d="M1245.0 538.0 C1237.2 541.6 1213.8 552.7 1198.0 559.5 C1182.2 566.3 1169.2 571.8 1150.0 578.6 C1130.8 585.4 1109.7 592.7 1083.0 600.3 C1056.3 607.9 1020.5 616.4 990.0 624.0 C959.5 631.6 928.3 639.3 900.0 646.0 C871.7 652.7 846.7 658.4 820.0 664.4 C793.3 670.4 766.7 676.1 740.0 682.0 C713.3 687.9 683.3 694.3 660.0 699.5 C636.7 704.7 616.3 709.8 600.0 713.0 C583.7 716.2 575.3 716.8 562.0 719.0 C548.7 721.2 527.0 724.8 520.0 726.0" fill="none" stroke="#3474ac" stroke-width="16"/>
<path d="M276 600 L300 640 L350 680 L300 660 Z" fill="#33609a"/>
</g>
<g filter="url(#bl10)">
<ellipse cx="545" cy="706" rx="90" ry="12" transform="rotate(-5 545 706)" fill="#50b2ea"/>
<ellipse cx="760" cy="660" rx="110" ry="7" transform="rotate(-13 760 660)" fill="#3d92cc" opacity="0.7"/>
</g>
</g>
<g shape-rendering="crispEdges"><path d="M334.3 586.8 C341.9 591.5 359.1 603.5 380.0 614.9 C400.9 626.2 440.0 646.3 460.0 654.9 C480.0 663.5 483.3 664.1 500.0 666.5 C516.7 668.9 533.3 671.5 560.0 669.3 C586.7 667.1 616.7 661.8 660.0 653.5 C703.3 645.2 765.0 632.1 820.0 619.5 C875.0 606.9 955.0 587.1 990.0 578.0 C1025.0 568.9 1019.5 568.4 1030.0 564.9 C1040.5 561.4 1043.5 561.0 1053.0 557.0 C1062.5 553.0 1077.5 546.0 1087.0 541.0 C1096.5 536.0 1103.7 531.6 1110.0 527.0 C1116.3 522.4 1120.7 519.1 1125.0 513.4 C1129.3 507.7 1133.3 500.2 1136.0 493.0 C1138.7 485.8 1140.3 477.2 1141.0 470.0 C1141.7 462.8 1142.0 457.7 1140.0 450.0 C1138.0 442.3 1135.2 433.0 1129.0 424.0 C1122.8 415.0 1114.5 406.0 1103.0 396.0 C1091.5 386.0 1067.2 369.3 1060.0 364.0" fill="none" stroke="#00a8a8" stroke-width="1"/>
<path d="M319.3 592.9 C329.4 598.9 356.6 616.9 380.0 629.1 C403.4 641.3 440.0 658.4 460.0 666.3 C480.0 674.1 483.3 674.7 500.0 676.2 C516.7 677.7 533.3 678.6 560.0 675.4 C586.7 672.2 616.7 666.0 660.0 657.0 C703.3 648.0 765.0 634.2 820.0 621.5 C875.0 608.8 955.0 589.7 990.0 581.0 C1025.0 572.3 1013.8 574.6 1030.0 569.4 C1046.2 564.2 1071.8 555.9 1087.0 550.0 C1102.2 544.1 1111.8 539.3 1121.0 534.0 C1130.2 528.7 1135.5 523.5 1142.0 518.0 C1148.5 512.5 1154.2 508.0 1160.0 501.0 C1165.8 494.0 1173.7 484.5 1177.0 476.0 C1180.3 467.5 1181.0 458.7 1180.0 450.0 C1179.0 441.3 1175.5 432.2 1171.0 424.0 C1166.5 415.8 1163.2 410.5 1153.0 401.0 C1142.8 391.5 1117.2 372.7 1110.0 367.0" fill="none" stroke="#00a8a8" stroke-width="1"/>
<path d="M305.7 598.9 C318.1 606.1 354.3 629.2 380.0 642.3 C405.7 655.4 440.0 670.6 460.0 677.7 C480.0 684.8 483.3 684.0 500.0 684.7 C516.7 685.4 533.3 686.0 560.0 682.0 C586.7 678.0 616.7 670.8 660.0 661.0 C703.3 651.2 765.0 636.3 820.0 623.5 C875.0 610.7 955.0 592.2 990.0 584.0 C1025.0 575.8 1008.2 580.8 1030.0 574.0 C1051.8 567.2 1099.3 551.0 1121.0 543.0 C1142.7 535.0 1151.2 530.5 1160.0 526.0 C1168.8 521.5 1167.3 522.2 1174.0 516.0 C1180.7 509.8 1193.5 497.3 1200.0 489.0 C1206.5 480.7 1210.3 473.5 1213.0 466.0 C1215.7 458.5 1216.0 450.0 1216.0 444.0 C1216.0 438.0 1215.2 435.2 1213.0 430.0 C1210.8 424.8 1207.0 418.0 1203.0 413.0 C1199.0 408.0 1193.7 404.3 1189.0 400.0 C1184.3 395.7 1181.0 391.5 1175.0 387.0 C1169.0 382.5 1156.7 375.3 1153.0 373.0" fill="none" stroke="#00a8a8" stroke-width="1"/>
<path d="M293.6 604.3 C308.0 612.6 352.3 640.5 380.0 654.3 C407.7 668.1 440.0 680.5 460.0 687.0 C480.0 693.5 483.3 693.0 500.0 693.2 C516.7 693.4 533.3 692.4 560.0 688.3 C586.7 684.2 616.7 677.9 660.0 668.6 C703.3 659.3 765.0 645.5 820.0 632.7 C875.0 619.9 955.0 600.6 990.0 592.0 C1025.0 583.4 1011.7 586.2 1030.0 580.9 C1048.3 575.6 1078.3 568.0 1100.0 560.0 C1121.7 552.0 1146.5 539.2 1160.0 533.0 C1173.5 526.8 1173.8 527.0 1181.0 523.0 C1188.2 519.0 1194.7 515.7 1203.0 509.0 C1211.3 502.3 1224.5 490.2 1231.0 483.0 C1237.5 475.8 1239.5 471.3 1242.0 466.0 C1244.5 460.7 1245.7 455.5 1246.0 451.0 C1246.3 446.5 1246.2 445.3 1244.0 439.0 C1241.8 432.7 1238.7 420.5 1233.0 413.0 C1227.3 405.5 1217.3 399.7 1210.0 394.0 C1202.7 388.3 1192.5 381.5 1189.0 379.0" fill="none" stroke="#00a8a8" stroke-width="1"/>
<path d="M284.3 612.5 C300.2 621.6 350.7 652.8 380.0 666.9 C409.3 681.0 440.0 691.4 460.0 697.1 C480.0 702.8 483.3 701.2 500.0 700.9 C516.7 700.6 533.3 699.5 560.0 695.2 C586.7 691.0 616.7 684.7 660.0 675.4 C703.3 666.1 765.0 652.3 820.0 639.5 C875.0 626.7 955.0 607.5 990.0 598.7 C1025.0 589.9 1001.7 595.1 1030.0 586.6 C1058.3 578.1 1131.7 557.0 1160.0 547.7 C1188.3 538.4 1186.7 538.1 1200.0 531.0 C1213.3 523.9 1230.0 512.8 1240.0 505.0 C1250.0 497.2 1255.2 490.5 1260.0 484.0 C1264.8 477.5 1266.8 471.5 1268.6 466.0 C1270.4 460.5 1270.8 456.0 1270.7 451.0 C1270.6 446.0 1269.8 440.3 1268.0 436.0 C1266.2 431.7 1263.0 428.7 1260.0 425.0 C1257.0 421.3 1252.7 416.8 1250.0 413.6 C1247.3 410.4 1246.8 408.8 1244.0 406.0 C1241.2 403.2 1237.5 400.3 1233.0 397.0 C1228.5 393.7 1219.7 387.8 1217.0 386.0" fill="none" stroke="#00a8a8" stroke-width="1"/>
<path d="M279.3 620.0 C296.1 629.5 349.9 662.7 380.0 677.1 C410.1 691.5 440.0 700.9 460.0 706.3 C480.0 711.7 483.3 710.0 500.0 709.4 C516.7 708.8 533.3 707.1 560.0 702.9 C586.7 698.7 616.7 693.3 660.0 684.0 C703.3 674.7 765.0 660.0 820.0 647.0 C875.0 634.0 955.0 614.8 990.0 606.0 C1025.0 597.2 1001.7 602.2 1030.0 594.0 C1058.3 585.8 1128.8 567.8 1160.0 556.9 C1191.2 546.0 1202.7 535.9 1217.0 528.6 C1231.3 521.3 1236.2 519.2 1245.7 512.9 C1255.2 506.6 1267.1 497.6 1274.0 491.0 C1280.9 484.4 1284.5 478.4 1287.0 473.0 C1289.5 467.6 1289.5 464.6 1289.3 458.6 C1289.1 452.6 1290.2 444.1 1285.7 437.0 C1281.2 429.9 1268.1 420.7 1262.0 416.0 C1255.9 411.3 1251.2 410.2 1249.0 409.0" fill="none" stroke="#00a8a8" stroke-width="1"/>
<path d="M276.4 628.6 C293.7 638.4 349.4 672.9 380.0 687.4 C410.6 701.9 440.0 710.2 460.0 715.4 C480.0 720.5 483.3 719.0 500.0 718.3 C516.7 717.6 533.3 715.5 560.0 711.0 C586.7 706.5 616.7 701.0 660.0 691.5 C703.3 682.0 765.0 666.7 820.0 653.8 C875.0 640.9 955.0 622.8 990.0 614.0 C1025.0 605.2 1001.7 608.8 1030.0 601.0 C1058.3 593.2 1126.7 578.6 1160.0 567.1 C1193.3 555.6 1213.3 540.4 1230.0 532.0 C1246.7 523.6 1250.2 523.3 1260.0 517.0 C1269.8 510.7 1282.2 501.3 1288.6 494.0 C1295.0 486.7 1297.2 478.7 1298.6 473.0 C1300.0 467.3 1297.3 462.2 1297.0 460.0" fill="none" stroke="#00a8a8" stroke-width="1"/>
<path d="M435.0 632.0 C430.8 634.2 416.2 641.7 410.0 645.0 C403.8 648.3 402.5 648.5 398.0 652.0 C393.5 655.5 386.8 661.0 383.0 666.0 C379.2 671.0 376.5 677.3 375.0 682.0 C373.5 686.7 374.2 692.0 374.0 694.0" fill="none" stroke="#00a8a8" stroke-width="1"/>
<path d="M514.0 660.0 C510.8 661.7 501.3 666.3 495.0 670.0 C488.7 673.7 481.8 677.3 476.0 682.0 C470.2 686.7 463.8 693.0 460.0 698.0 C456.2 703.0 454.5 707.7 453.0 712.0 C451.5 716.3 451.3 722.0 451.0 724.0" fill="none" stroke="#00a8a8" stroke-width="1"/>
<path d="M604.0 659.0 C601.7 660.5 594.3 664.7 590.0 668.0 C585.7 671.3 581.7 675.0 578.0 679.0 C574.3 683.0 570.7 687.5 568.0 692.0 C565.3 696.5 563.3 701.5 562.0 706.0 C560.7 710.5 560.3 716.8 560.0 719.0" fill="none" stroke="#00a8a8" stroke-width="1"/>
<path d="M830.0 616.0 C827.8 618.0 820.6 624.5 817.0 628.0 C813.4 631.5 811.2 632.6 808.5 637.0 C805.8 641.4 802.3 649.2 801.0 654.4 C799.7 659.6 800.6 665.7 800.5 668.0" fill="none" stroke="#00a8a8" stroke-width="1"/>
<path d="M1032.0 561.0 C1033.0 560.7 1035.8 558.0 1038.0 559.0 C1040.2 560.0 1043.3 564.2 1045.0 567.0 C1046.7 569.8 1047.0 572.2 1048.0 576.0 C1049.0 579.8 1050.2 584.0 1051.0 590.0 C1051.8 596.0 1052.7 608.3 1053.0 612.0" fill="none" stroke="#00a8a8" stroke-width="1"/>
<path d="M1097.0 448.6 C1104.4 449.6 1127.6 452.4 1141.4 454.3 C1155.2 456.2 1168.6 458.1 1180.0 460.0 C1191.4 461.9 1200.0 463.6 1210.0 465.7 C1220.0 467.8 1231.2 470.3 1240.0 472.9 C1248.8 475.5 1255.3 477.4 1262.9 481.4 C1270.5 485.4 1280.4 493.1 1285.7 497.0 C1291.0 500.9 1293.5 503.7 1295.0 505.0" fill="none" stroke="#00a8a8" stroke-width="1"/>
<path d="M1103.0 509.4 C1106.5 510.2 1116.8 512.0 1123.7 514.0 C1130.6 516.0 1138.2 518.8 1144.3 521.4 C1150.3 524.0 1155.0 527.6 1160.0 529.4 C1165.0 531.2 1169.7 528.2 1174.0 532.0 C1178.3 535.8 1183.2 547.2 1185.7 552.4 C1188.2 557.6 1188.5 561.2 1189.0 563.0" fill="none" stroke="#00a8a8" stroke-width="1"/>
<path d="M352.0 582.0 L401.8 613.0 L488.7 662.5 L600.9 670.0 L1081.7 560.7 L1119.8 497.9 L1090.8 416.0 L1002.0 361.0" fill="none" stroke="#b8ac90" stroke-width="1"/>
<path d="M275.0 637.0 L331.0 672.0 L434.8 729.0 L515.0 737.0 L1083.7 602.0 L1218.0 562.0 L1353.0 474.0 L1249.0 409.0" fill="none" stroke="#b8ac90" stroke-width="1"/>
<path d="M275.0 637.0 C275.1 635.3 274.4 631.0 275.7 627.0 C277.0 623.0 279.9 616.8 283.0 613.0 C286.1 609.2 288.3 607.6 294.0 604.3 C299.7 601.0 310.3 595.9 317.0 593.0 C323.7 590.1 328.2 588.8 334.0 587.0 C339.8 585.2 349.0 582.8 352.0 582.0" fill="none" stroke="#00a8a8" stroke-width="1"/>
<path d="M1002.0 361.0 C1006.7 361.2 1020.3 361.6 1030.0 362.0 C1039.7 362.4 1047.8 362.8 1060.0 363.6 C1072.2 364.4 1087.8 365.4 1103.0 367.0 C1118.2 368.6 1136.7 371.0 1151.0 373.0 C1165.3 375.0 1179.7 377.5 1189.0 379.0 C1198.3 380.5 1201.2 380.5 1207.0 382.0 C1212.8 383.5 1218.7 386.1 1224.0 388.0 C1229.3 389.9 1234.8 391.3 1238.6 393.6 C1242.4 395.9 1245.6 400.3 1247.0 401.6" fill="none" stroke="#00a8a8" stroke-width="1"/>
<path d="M1247.0 401.6 C1248.0 402.2 1250.5 403.4 1253.0 405.0 C1255.5 406.6 1258.7 408.4 1262.0 411.0 C1265.3 413.6 1268.8 416.8 1273.0 420.5 C1277.2 424.2 1283.6 429.8 1287.0 433.4 C1290.4 437.0 1292.4 440.6 1293.5 442.0 L1298.2 453.8 L1292 442.3 L1280 429.4 L1266.5 419.5 L1249 409 Z" fill="#164860" stroke="none"/>
<path d="M1247.0 401.6 C1248.0 402.2 1250.5 403.4 1253.0 405.0 C1255.5 406.6 1258.7 408.4 1262.0 411.0 C1265.3 413.6 1268.8 416.8 1273.0 420.5 C1277.2 424.2 1283.6 429.8 1287.0 433.4 C1290.4 437.0 1292.4 440.6 1293.5 442.0" fill="none" stroke="#00a8a8" stroke-width="1"/>
<path d="M352.0 582.0 C356.2 584.5 368.7 591.8 377.0 597.0 C385.3 602.2 392.7 607.3 402.0 613.0 C411.3 618.7 423.3 625.7 433.0 631.0 C442.7 636.3 450.8 641.0 460.0 645.0 C469.2 649.0 478.8 652.4 488.0 655.0 C497.2 657.6 506.3 659.3 515.0 660.5 C523.7 661.7 530.8 661.9 540.0 662.0 C549.2 662.1 560.0 661.7 570.0 661.0 C580.0 660.3 585.0 659.8 600.0 658.0 C615.0 656.2 643.3 652.5 660.0 650.0 C676.7 647.5 683.3 646.2 700.0 643.0 C716.7 639.8 740.0 635.3 760.0 631.0 C780.0 626.7 800.0 621.8 820.0 617.0 C840.0 612.2 860.0 606.8 880.0 602.0 C900.0 597.2 923.3 592.2 940.0 588.0 C956.7 583.8 967.7 580.5 980.0 577.0 C992.3 573.5 1002.5 571.3 1014.0 567.0 C1025.5 562.7 1039.0 556.0 1049.0 551.4 C1059.0 546.8 1067.2 543.4 1074.0 539.4 C1080.8 535.4 1085.7 531.4 1090.0 527.4 C1094.3 523.4 1097.5 520.0 1100.0 515.4 C1102.5 510.8 1104.0 505.4 1105.0 500.0 C1106.0 494.6 1106.3 488.2 1106.0 483.0 C1105.7 477.8 1104.7 473.9 1103.4 469.0 C1102.1 464.1 1100.3 458.5 1098.3 453.7 C1096.3 448.9 1094.7 445.1 1091.4 440.0 C1088.1 434.9 1083.8 428.8 1078.6 423.0 C1073.4 417.2 1067.9 412.3 1060.0 405.0 C1052.1 397.7 1040.7 386.3 1031.0 379.0 C1021.3 371.7 1006.8 364.0 1002.0 361.0" fill="none" stroke="#00ffff" stroke-width="1"/>
<path d="M1249.0 409.0 C1251.9 410.8 1261.3 416.1 1266.5 419.5 C1271.7 422.9 1275.8 425.6 1280.0 429.4 C1284.2 433.2 1289.0 438.2 1292.0 442.3 C1295.0 446.4 1296.6 449.9 1298.2 453.8 C1299.8 457.8 1301.0 463.0 1301.6 466.0 C1302.2 469.0 1302.0 472.6 1302.0 472.0 C1302.0 471.4 1301.6 462.4 1301.6 462.4 C1301.6 462.4 1302.1 468.6 1302.0 472.0 C1301.9 475.4 1301.8 479.5 1301.0 483.0 C1300.2 486.5 1299.5 488.7 1297.0 493.0 C1294.5 497.3 1292.2 502.7 1286.0 508.6 C1279.8 514.5 1266.8 523.7 1260.0 528.6 C1253.2 533.5 1255.3 532.9 1245.0 538.0 C1234.7 543.1 1213.8 552.7 1198.0 559.5 C1182.2 566.3 1169.2 571.8 1150.0 578.6 C1130.8 585.4 1109.7 592.7 1083.0 600.3 C1056.3 607.9 1020.5 616.4 990.0 624.0 C959.5 631.6 928.3 639.3 900.0 646.0 C871.7 652.7 846.7 658.4 820.0 664.4 C793.3 670.4 766.7 676.1 740.0 682.0 C713.3 687.9 683.3 694.3 660.0 699.5 C636.7 704.7 616.3 709.8 600.0 713.0 C583.7 716.2 575.3 716.8 562.0 719.0 C548.7 721.2 532.4 724.5 520.0 726.0 C507.6 727.5 499.2 728.4 487.5 728.0 C475.8 727.6 462.9 726.6 450.0 723.8 C437.1 720.9 422.7 715.7 410.0 710.7 C397.3 705.7 387.2 700.1 374.0 693.6 C360.8 687.1 347.5 681.1 331.0 671.7 C314.5 662.3 284.3 642.8 275.0 637.0" fill="none" stroke="#00ffff" stroke-width="1"/>
<path d="M275.4 600.4 C277.7 601.7 281.5 603.5 289.3 608.2 C297.1 612.9 309.4 621.4 322.0 628.6 C334.6 635.8 350.3 644.5 365.0 651.4 C379.7 658.3 395.8 664.2 410.0 670.0 C424.2 675.8 435.0 682.6 450.0 686.0 C465.0 689.4 481.7 691.0 500.0 690.3 C518.3 689.6 533.3 686.6 560.0 682.0 C586.7 677.4 615.0 672.1 660.0 662.4 C705.0 652.7 775.0 636.8 830.0 624.0 C885.0 611.2 947.8 596.2 990.0 585.7 C1032.2 575.2 1058.0 567.7 1083.0 561.0 C1108.0 554.3 1123.7 550.6 1140.0 545.4 C1156.3 540.2 1170.5 534.2 1181.0 530.0 C1191.5 525.8 1192.2 524.8 1203.0 520.0 C1213.8 515.2 1233.4 508.1 1246.0 501.4 C1258.6 494.7 1270.1 487.4 1278.6 480.0 C1287.1 472.6 1293.2 462.5 1297.0 457.0 C1300.8 451.5 1300.4 450.3 1301.4 447.0 C1302.4 443.7 1303.9 442.2 1302.9 437.0 C1302.0 431.8 1299.3 422.8 1295.7 415.7 C1292.1 408.6 1286.9 400.2 1281.4 394.3 C1275.9 388.4 1268.3 383.9 1262.9 380.0 C1257.5 376.1 1251.3 372.5 1249.0 371.0" fill="none" stroke="#00ffff" stroke-width="1"/></g>
<path d="M254 642h1.3v1.3h-1.3z M262 640h1.3v1.3h-1.3z M270 638h1.3v1.3h-1.3z M278 636h1.3v1.3h-1.3z M286 635h1.3v1.3h-1.3z M294 633h1.3v1.3h-1.3z M302 631h1.3v1.3h-1.3z M310 629h1.3v1.3h-1.3z M318 627h1.3v1.3h-1.3z M326 625h1.3v1.3h-1.3z M334 623h1.3v1.3h-1.3z M342 621h1.3v1.3h-1.3z M350 620h1.3v1.3h-1.3z M358 618h1.3v1.3h-1.3z M366 616h1.3v1.3h-1.3z M374 614h1.3v1.3h-1.3z M382 612h1.3v1.3h-1.3z M390 610h1.3v1.3h-1.3z M398 608h1.3v1.3h-1.3z M406 606h1.3v1.3h-1.3z M414 605h1.3v1.3h-1.3z M422 603h1.3v1.3h-1.3z M430 601h1.3v1.3h-1.3z M438 599h1.3v1.3h-1.3z M446 597h1.3v1.3h-1.3z M454 595h1.3v1.3h-1.3z M462 593h1.3v1.3h-1.3z M470 591h1.3v1.3h-1.3z M478 590h1.3v1.3h-1.3z M486 588h1.3v1.3h-1.3z M494 586h1.3v1.3h-1.3z M502 584h1.3v1.3h-1.3z M510 582h1.3v1.3h-1.3z M518 580h1.3v1.3h-1.3z M526 578h1.3v1.3h-1.3z M534 576h1.3v1.3h-1.3z M542 574h1.3v1.3h-1.3z M550 573h1.3v1.3h-1.3z M558 571h1.3v1.3h-1.3z M566 569h1.3v1.3h-1.3z M574 567h1.3v1.3h-1.3z M582 565h1.3v1.3h-1.3z M590 563h1.3v1.3h-1.3z M598 561h1.3v1.3h-1.3z M606 559h1.3v1.3h-1.3z M614 558h1.3v1.3h-1.3z M622 556h1.3v1.3h-1.3z M630 554h1.3v1.3h-1.3z M638 552h1.3v1.3h-1.3z M646 550h1.3v1.3h-1.3z M654 548h1.3v1.3h-1.3z M662 546h1.3v1.3h-1.3z M670 544h1.3v1.3h-1.3z M678 543h1.3v1.3h-1.3z M686 541h1.3v1.3h-1.3z M694 539h1.3v1.3h-1.3z M702 537h1.3v1.3h-1.3z M710 535h1.3v1.3h-1.3z M718 533h1.3v1.3h-1.3z M726 531h1.3v1.3h-1.3z M734 529h1.3v1.3h-1.3z M742 528h1.3v1.3h-1.3z M750 526h1.3v1.3h-1.3z M758 524h1.3v1.3h-1.3z M766 522h1.3v1.3h-1.3z M774 520h1.3v1.3h-1.3z M782 518h1.3v1.3h-1.3z M790 516h1.3v1.3h-1.3z M798 514h1.3v1.3h-1.3z M806 512h1.3v1.3h-1.3z M814 511h1.3v1.3h-1.3z M822 509h1.3v1.3h-1.3z M830 507h1.3v1.3h-1.3z M838 505h1.3v1.3h-1.3z M846 503h1.3v1.3h-1.3z M854 501h1.3v1.3h-1.3z M862 499h1.3v1.3h-1.3z M870 497h1.3v1.3h-1.3z M878 496h1.3v1.3h-1.3z M886 494h1.3v1.3h-1.3z M894 492h1.3v1.3h-1.3z M902 490h1.3v1.3h-1.3z M910 488h1.3v1.3h-1.3z M918 486h1.3v1.3h-1.3z M926 484h1.3v1.3h-1.3z M934 482h1.3v1.3h-1.3z M942 481h1.3v1.3h-1.3z M950 479h1.3v1.3h-1.3z M958 477h1.3v1.3h-1.3z M966 475h1.3v1.3h-1.3z M974 473h1.3v1.3h-1.3z M982 471h1.3v1.3h-1.3z M990 469h1.3v1.3h-1.3z M998 467h1.3v1.3h-1.3z M1006 466h1.3v1.3h-1.3z M1014 464h1.3v1.3h-1.3z M1022 462h1.3v1.3h-1.3z M1030 460h1.3v1.3h-1.3z M1038 458h1.3v1.3h-1.3z M1046 456h1.3v1.3h-1.3z M1054 454h1.3v1.3h-1.3z M1062 452h1.3v1.3h-1.3z M1070 451h1.3v1.3h-1.3z M1078 449h1.3v1.3h-1.3z M1086 447h1.3v1.3h-1.3z M1094 445h1.3v1.3h-1.3z M1102 443h1.3v1.3h-1.3z M1110 441h1.3v1.3h-1.3z M1118 439h1.3v1.3h-1.3z M1126 437h1.3v1.3h-1.3z M1134 435h1.3v1.3h-1.3z M1142 434h1.3v1.3h-1.3z M1150 432h1.3v1.3h-1.3z M1158 430h1.3v1.3h-1.3z M1166 428h1.3v1.3h-1.3z M1174 426h1.3v1.3h-1.3z M1182 424h1.3v1.3h-1.3z M1190 422h1.3v1.3h-1.3z M1198 420h1.3v1.3h-1.3z M1206 419h1.3v1.3h-1.3z M1214 417h1.3v1.3h-1.3z M1222 415h1.3v1.3h-1.3z M1230 413h1.3v1.3h-1.3z M1238 411h1.3v1.3h-1.3z M1246 409h1.3v1.3h-1.3z M1254 407h1.3v1.3h-1.3z M1262 405h1.3v1.3h-1.3z M1270 404h1.3v1.3h-1.3z M1278 402h1.3v1.3h-1.3z M1286 400h1.3v1.3h-1.3z M1294 398h1.3v1.3h-1.3z M1302 396h1.3v1.3h-1.3z M1310 394h1.3v1.3h-1.3z M1318 392h1.3v1.3h-1.3z M1326 390h1.3v1.3h-1.3z M1334 389h1.3v1.3h-1.3z M1342 387h1.3v1.3h-1.3z M1350 385h1.3v1.3h-1.3z M1358 383h1.3v1.3h-1.3z M1366 381h1.3v1.3h-1.3z M1374 379h1.3v1.3h-1.3z M1382 377h1.3v1.3h-1.3z M1390 375h1.3v1.3h-1.3z M925 206h1.3v1.3h-1.3z M933 211h1.3v1.3h-1.3z M941 216h1.3v1.3h-1.3z M949 221h1.3v1.3h-1.3z M957 226h1.3v1.3h-1.3z M965 231h1.3v1.3h-1.3z M973 236h1.3v1.3h-1.3z M981 241h1.3v1.3h-1.3z M989 246h1.3v1.3h-1.3z M997 251h1.3v1.3h-1.3z M1005 256h1.3v1.3h-1.3z M1013 261h1.3v1.3h-1.3z M1021 266h1.3v1.3h-1.3z M1029 271h1.3v1.3h-1.3z M1037 276h1.3v1.3h-1.3z M1045 281h1.3v1.3h-1.3z M1053 286h1.3v1.3h-1.3z M1061 291h1.3v1.3h-1.3z M1069 296h1.3v1.3h-1.3z M1077 301h1.3v1.3h-1.3z M1085 306h1.3v1.3h-1.3z M1093 311h1.3v1.3h-1.3z M1101 316h1.3v1.3h-1.3z M1109 321h1.3v1.3h-1.3z M1117 326h1.3v1.3h-1.3z M1125 331h1.3v1.3h-1.3z M1133 336h1.3v1.3h-1.3z M1141 341h1.3v1.3h-1.3z M1149 346h1.3v1.3h-1.3z M1157 351h1.3v1.3h-1.3z M1165 356h1.3v1.3h-1.3z M1173 361h1.3v1.3h-1.3z M1181 366h1.3v1.3h-1.3z M1189 371h1.3v1.3h-1.3z M1197 376h1.3v1.3h-1.3z M1205 381h1.3v1.3h-1.3z M1213 386h1.3v1.3h-1.3z M1221 391h1.3v1.3h-1.3z M1229 396h1.3v1.3h-1.3z M1237 401h1.3v1.3h-1.3z M1245 406h1.3v1.3h-1.3z M1253 411h1.3v1.3h-1.3z M1261 416h1.3v1.3h-1.3z M1269 421h1.3v1.3h-1.3z M1277 426h1.3v1.3h-1.3z M1285 431h1.3v1.3h-1.3z M1293 436h1.3v1.3h-1.3z M1301 441h1.3v1.3h-1.3z M1309 446h1.3v1.3h-1.3z M1317 451h1.3v1.3h-1.3z M1325 456h1.3v1.3h-1.3z M1333 461h1.3v1.3h-1.3z M1341 466h1.3v1.3h-1.3z M1349 471h1.3v1.3h-1.3z M1357 476h1.3v1.3h-1.3z M1365 481h1.3v1.3h-1.3z M1373 486h1.3v1.3h-1.3z M1381 491h1.3v1.3h-1.3z M1389 496h1.3v1.3h-1.3z M1397 501h1.3v1.3h-1.3z M1249 111h1.3v1.3h-1.3z M1249 119h1.3v1.3h-1.3z M1249 127h1.3v1.3h-1.3z M1249 135h1.3v1.3h-1.3z M1249 143h1.3v1.3h-1.3z M1249 151h1.3v1.3h-1.3z M1249 159h1.3v1.3h-1.3z M1249 167h1.3v1.3h-1.3z M1249 175h1.3v1.3h-1.3z M1249 183h1.3v1.3h-1.3z M1249 191h1.3v1.3h-1.3z M1249 199h1.3v1.3h-1.3z M1249 207h1.3v1.3h-1.3z M1249 215h1.3v1.3h-1.3z M1249 223h1.3v1.3h-1.3z M1249 231h1.3v1.3h-1.3z M1249 239h1.3v1.3h-1.3z M1249 247h1.3v1.3h-1.3z M1249 255h1.3v1.3h-1.3z M1249 263h1.3v1.3h-1.3z M1249 271h1.3v1.3h-1.3z M1249 279h1.3v1.3h-1.3z M1249 287h1.3v1.3h-1.3z M1249 295h1.3v1.3h-1.3z M1249 303h1.3v1.3h-1.3z M1249 311h1.3v1.3h-1.3z M1249 319h1.3v1.3h-1.3z M1249 327h1.3v1.3h-1.3z M1249 335h1.3v1.3h-1.3z M1249 343h1.3v1.3h-1.3z M1249 351h1.3v1.3h-1.3z M1249 359h1.3v1.3h-1.3z M1249 367h1.3v1.3h-1.3z M1249 375h1.3v1.3h-1.3z M1249 383h1.3v1.3h-1.3z M1249 391h1.3v1.3h-1.3z M1249 399h1.3v1.3h-1.3z M1249 407h1.3v1.3h-1.3z M1249 415h1.3v1.3h-1.3z M1249 423h1.3v1.3h-1.3z M1249 431h1.3v1.3h-1.3z M1249 439h1.3v1.3h-1.3z M1249 447h1.3v1.3h-1.3z M1249 455h1.3v1.3h-1.3z M1249 463h1.3v1.3h-1.3z M1249 471h1.3v1.3h-1.3z M1249 479h1.3v1.3h-1.3z M1249 487h1.3v1.3h-1.3z M1249 495h1.3v1.3h-1.3z M1249 503h1.3v1.3h-1.3z M1249 511h1.3v1.3h-1.3z M1249 519h1.3v1.3h-1.3z M1249 527h1.3v1.3h-1.3z M1249 535h1.3v1.3h-1.3z M1249 543h1.3v1.3h-1.3z M1249 551h1.3v1.3h-1.3z M1249 559h1.3v1.3h-1.3z M1249 567h1.3v1.3h-1.3z M1249 575h1.3v1.3h-1.3z M1249 583h1.3v1.3h-1.3z M1249 591h1.3v1.3h-1.3z M1249 599h1.3v1.3h-1.3z M1249 607h1.3v1.3h-1.3z M1249 615h1.3v1.3h-1.3z M1249 623h1.3v1.3h-1.3z M1249 631h1.3v1.3h-1.3z M1249 639h1.3v1.3h-1.3z M1249 647h1.3v1.3h-1.3z M1249 655h1.3v1.3h-1.3z M1249 663h1.3v1.3h-1.3z M1249 671h1.3v1.3h-1.3z M1249 679h1.3v1.3h-1.3z" fill="#000"/>
<path d="M254 642h1.3v1.3h-1.3z M262 640h1.3v1.3h-1.3z M270 638h1.3v1.3h-1.3z M278 636h1.3v1.3h-1.3z M286 635h1.3v1.3h-1.3z M294 633h1.3v1.3h-1.3z M302 631h1.3v1.3h-1.3z M310 629h1.3v1.3h-1.3z M318 627h1.3v1.3h-1.3z M326 625h1.3v1.3h-1.3z M334 623h1.3v1.3h-1.3z M342 621h1.3v1.3h-1.3z M350 620h1.3v1.3h-1.3z M358 618h1.3v1.3h-1.3z M366 616h1.3v1.3h-1.3z M374 614h1.3v1.3h-1.3z M382 612h1.3v1.3h-1.3z M390 610h1.3v1.3h-1.3z M398 608h1.3v1.3h-1.3z M406 606h1.3v1.3h-1.3z M414 605h1.3v1.3h-1.3z M422 603h1.3v1.3h-1.3z M430 601h1.3v1.3h-1.3z M438 599h1.3v1.3h-1.3z M446 597h1.3v1.3h-1.3z M454 595h1.3v1.3h-1.3z M462 593h1.3v1.3h-1.3z M470 591h1.3v1.3h-1.3z M478 590h1.3v1.3h-1.3z M486 588h1.3v1.3h-1.3z M494 586h1.3v1.3h-1.3z M502 584h1.3v1.3h-1.3z M510 582h1.3v1.3h-1.3z M518 580h1.3v1.3h-1.3z M526 578h1.3v1.3h-1.3z M534 576h1.3v1.3h-1.3z M542 574h1.3v1.3h-1.3z M550 573h1.3v1.3h-1.3z M558 571h1.3v1.3h-1.3z M566 569h1.3v1.3h-1.3z M574 567h1.3v1.3h-1.3z M582 565h1.3v1.3h-1.3z M590 563h1.3v1.3h-1.3z M598 561h1.3v1.3h-1.3z M606 559h1.3v1.3h-1.3z M614 558h1.3v1.3h-1.3z M622 556h1.3v1.3h-1.3z M630 554h1.3v1.3h-1.3z M638 552h1.3v1.3h-1.3z M646 550h1.3v1.3h-1.3z M654 548h1.3v1.3h-1.3z M662 546h1.3v1.3h-1.3z M670 544h1.3v1.3h-1.3z M678 543h1.3v1.3h-1.3z M686 541h1.3v1.3h-1.3z M694 539h1.3v1.3h-1.3z M702 537h1.3v1.3h-1.3z M710 535h1.3v1.3h-1.3z M718 533h1.3v1.3h-1.3z M726 531h1.3v1.3h-1.3z M734 529h1.3v1.3h-1.3z M742 528h1.3v1.3h-1.3z M750 526h1.3v1.3h-1.3z M758 524h1.3v1.3h-1.3z M766 522h1.3v1.3h-1.3z M774 520h1.3v1.3h-1.3z M782 518h1.3v1.3h-1.3z M790 516h1.3v1.3h-1.3z M798 514h1.3v1.3h-1.3z M806 512h1.3v1.3h-1.3z M814 511h1.3v1.3h-1.3z M822 509h1.3v1.3h-1.3z M830 507h1.3v1.3h-1.3z M838 505h1.3v1.3h-1.3z M846 503h1.3v1.3h-1.3z M854 501h1.3v1.3h-1.3z M862 499h1.3v1.3h-1.3z M870 497h1.3v1.3h-1.3z M878 496h1.3v1.3h-1.3z M886 494h1.3v1.3h-1.3z M894 492h1.3v1.3h-1.3z M902 490h1.3v1.3h-1.3z M910 488h1.3v1.3h-1.3z M918 486h1.3v1.3h-1.3z M926 484h1.3v1.3h-1.3z M934 482h1.3v1.3h-1.3z M942 481h1.3v1.3h-1.3z M950 479h1.3v1.3h-1.3z M958 477h1.3v1.3h-1.3z M966 475h1.3v1.3h-1.3z M974 473h1.3v1.3h-1.3z M982 471h1.3v1.3h-1.3z M990 469h1.3v1.3h-1.3z M998 467h1.3v1.3h-1.3z M1006 466h1.3v1.3h-1.3z M1014 464h1.3v1.3h-1.3z M1022 462h1.3v1.3h-1.3z M1030 460h1.3v1.3h-1.3z M1038 458h1.3v1.3h-1.3z M1046 456h1.3v1.3h-1.3z M1054 454h1.3v1.3h-1.3z M1062 452h1.3v1.3h-1.3z M1070 451h1.3v1.3h-1.3z M1078 449h1.3v1.3h-1.3z M1086 447h1.3v1.3h-1.3z M1094 445h1.3v1.3h-1.3z M1102 443h1.3v1.3h-1.3z M1110 441h1.3v1.3h-1.3z M1118 439h1.3v1.3h-1.3z M1126 437h1.3v1.3h-1.3z M1134 435h1.3v1.3h-1.3z M1142 434h1.3v1.3h-1.3z M1150 432h1.3v1.3h-1.3z M1158 430h1.3v1.3h-1.3z M1166 428h1.3v1.3h-1.3z M1174 426h1.3v1.3h-1.3z M1182 424h1.3v1.3h-1.3z M1190 422h1.3v1.3h-1.3z M1198 420h1.3v1.3h-1.3z M1206 419h1.3v1.3h-1.3z M1214 417h1.3v1.3h-1.3z M1222 415h1.3v1.3h-1.3z M1230 413h1.3v1.3h-1.3z M1238 411h1.3v1.3h-1.3z M1246 409h1.3v1.3h-1.3z M1254 407h1.3v1.3h-1.3z M1262 405h1.3v1.3h-1.3z M1270 404h1.3v1.3h-1.3z M1278 402h1.3v1.3h-1.3z M1286 400h1.3v1.3h-1.3z M1294 398h1.3v1.3h-1.3z M1302 396h1.3v1.3h-1.3z M1310 394h1.3v1.3h-1.3z M1318 392h1.3v1.3h-1.3z M1326 390h1.3v1.3h-1.3z M1334 389h1.3v1.3h-1.3z M1342 387h1.3v1.3h-1.3z M1350 385h1.3v1.3h-1.3z M1358 383h1.3v1.3h-1.3z M1366 381h1.3v1.3h-1.3z M1374 379h1.3v1.3h-1.3z M1382 377h1.3v1.3h-1.3z M1390 375h1.3v1.3h-1.3z M925 206h1.3v1.3h-1.3z M933 211h1.3v1.3h-1.3z M941 216h1.3v1.3h-1.3z M949 221h1.3v1.3h-1.3z M957 226h1.3v1.3h-1.3z M965 231h1.3v1.3h-1.3z M973 236h1.3v1.3h-1.3z M981 241h1.3v1.3h-1.3z M989 246h1.3v1.3h-1.3z M997 251h1.3v1.3h-1.3z M1005 256h1.3v1.3h-1.3z M1013 261h1.3v1.3h-1.3z M1021 266h1.3v1.3h-1.3z M1029 271h1.3v1.3h-1.3z M1037 276h1.3v1.3h-1.3z M1045 281h1.3v1.3h-1.3z M1053 286h1.3v1.3h-1.3z M1061 291h1.3v1.3h-1.3z M1069 296h1.3v1.3h-1.3z M1077 301h1.3v1.3h-1.3z M1085 306h1.3v1.3h-1.3z M1093 311h1.3v1.3h-1.3z M1101 316h1.3v1.3h-1.3z M1109 321h1.3v1.3h-1.3z M1117 326h1.3v1.3h-1.3z M1125 331h1.3v1.3h-1.3z M1133 336h1.3v1.3h-1.3z M1141 341h1.3v1.3h-1.3z M1149 346h1.3v1.3h-1.3z M1157 351h1.3v1.3h-1.3z M1165 356h1.3v1.3h-1.3z M1173 361h1.3v1.3h-1.3z M1181 366h1.3v1.3h-1.3z M1189 371h1.3v1.3h-1.3z M1197 376h1.3v1.3h-1.3z M1205 381h1.3v1.3h-1.3z M1213 386h1.3v1.3h-1.3z M1221 391h1.3v1.3h-1.3z M1229 396h1.3v1.3h-1.3z M1237 401h1.3v1.3h-1.3z M1245 406h1.3v1.3h-1.3z M1253 411h1.3v1.3h-1.3z M1261 416h1.3v1.3h-1.3z M1269 421h1.3v1.3h-1.3z M1277 426h1.3v1.3h-1.3z M1285 431h1.3v1.3h-1.3z M1293 436h1.3v1.3h-1.3z M1301 441h1.3v1.3h-1.3z M1309 446h1.3v1.3h-1.3z M1317 451h1.3v1.3h-1.3z M1325 456h1.3v1.3h-1.3z M1333 461h1.3v1.3h-1.3z M1341 466h1.3v1.3h-1.3z M1349 471h1.3v1.3h-1.3z M1357 476h1.3v1.3h-1.3z M1365 481h1.3v1.3h-1.3z M1373 486h1.3v1.3h-1.3z M1381 491h1.3v1.3h-1.3z M1389 496h1.3v1.3h-1.3z M1397 501h1.3v1.3h-1.3z M1249 111h1.3v1.3h-1.3z M1249 119h1.3v1.3h-1.3z M1249 127h1.3v1.3h-1.3z M1249 135h1.3v1.3h-1.3z M1249 143h1.3v1.3h-1.3z M1249 151h1.3v1.3h-1.3z M1249 159h1.3v1.3h-1.3z M1249 167h1.3v1.3h-1.3z M1249 175h1.3v1.3h-1.3z M1249 183h1.3v1.3h-1.3z M1249 191h1.3v1.3h-1.3z M1249 199h1.3v1.3h-1.3z M1249 207h1.3v1.3h-1.3z M1249 215h1.3v1.3h-1.3z M1249 223h1.3v1.3h-1.3z M1249 231h1.3v1.3h-1.3z M1249 239h1.3v1.3h-1.3z M1249 247h1.3v1.3h-1.3z M1249 255h1.3v1.3h-1.3z M1249 263h1.3v1.3h-1.3z M1249 271h1.3v1.3h-1.3z M1249 279h1.3v1.3h-1.3z M1249 287h1.3v1.3h-1.3z M1249 295h1.3v1.3h-1.3z M1249 303h1.3v1.3h-1.3z M1249 311h1.3v1.3h-1.3z M1249 319h1.3v1.3h-1.3z M1249 327h1.3v1.3h-1.3z M1249 335h1.3v1.3h-1.3z M1249 343h1.3v1.3h-1.3z M1249 351h1.3v1.3h-1.3z M1249 359h1.3v1.3h-1.3z M1249 367h1.3v1.3h-1.3z M1249 375h1.3v1.3h-1.3z M1249 383h1.3v1.3h-1.3z M1249 391h1.3v1.3h-1.3z M1249 399h1.3v1.3h-1.3z M1249 407h1.3v1.3h-1.3z M1249 415h1.3v1.3h-1.3z M1249 423h1.3v1.3h-1.3z M1249 431h1.3v1.3h-1.3z M1249 439h1.3v1.3h-1.3z M1249 447h1.3v1.3h-1.3z M1249 455h1.3v1.3h-1.3z M1249 463h1.3v1.3h-1.3z M1249 471h1.3v1.3h-1.3z M1249 479h1.3v1.3h-1.3z M1249 487h1.3v1.3h-1.3z M1249 495h1.3v1.3h-1.3z M1249 503h1.3v1.3h-1.3z M1249 511h1.3v1.3h-1.3z M1249 519h1.3v1.3h-1.3z M1249 527h1.3v1.3h-1.3z M1249 535h1.3v1.3h-1.3z M1249 543h1.3v1.3h-1.3z M1249 551h1.3v1.3h-1.3z M1249 559h1.3v1.3h-1.3z M1249 567h1.3v1.3h-1.3z M1249 575h1.3v1.3h-1.3z M1249 583h1.3v1.3h-1.3z M1249 591h1.3v1.3h-1.3z M1249 599h1.3v1.3h-1.3z M1249 607h1.3v1.3h-1.3z M1249 615h1.3v1.3h-1.3z M1249 623h1.3v1.3h-1.3z M1249 631h1.3v1.3h-1.3z M1249 639h1.3v1.3h-1.3z M1249 647h1.3v1.3h-1.3z M1249 655h1.3v1.3h-1.3z M1249 663h1.3v1.3h-1.3z M1249 671h1.3v1.3h-1.3z M1249 679h1.3v1.3h-1.3z" fill="#0c3848" clip-path="url(#sc)"/>
<rect x="350.0" y="580.0" width="4" height="4" fill="#ffff00"/>
<rect x="273.0" y="635.0" width="4" height="4" fill="#ffff00"/>
<rect x="400.3" y="611.5" width="3" height="3" fill="#ffff00"/>
<rect x="329.5" y="670.5" width="3" height="3" fill="#ffff00"/>
<rect x="486.7" y="660.5" width="4" height="4" fill="#ffff00"/>
<rect x="433.3" y="727.5" width="3" height="3" fill="#ffff00"/>
<rect x="598.9" y="668.0" width="4" height="4" fill="#ffff00"/>
<rect x="513.0" y="735.0" width="4" height="4" fill="#ffff00"/>
<rect x="1080.2" y="559.2" width="3" height="3" fill="#ffff00"/>
<rect x="1081.7" y="600.0" width="4" height="4" fill="#ffff00"/>
<rect x="1117.8" y="495.9" width="4" height="4" fill="#ffff00"/>
<rect x="1216.5" y="560.5" width="3" height="3" fill="#ffff00"/>
<rect x="1088.8" y="414.0" width="4" height="4" fill="#ffff00"/>
<rect x="1351.5" y="472.5" width="3" height="3" fill="#ffff00"/>
<rect x="1000.0" y="359.0" width="4" height="4" fill="#ffff00"/>
<rect x="1247.0" y="407.0" width="4" height="4" fill="#ffff00"/>
<rect x="1247.0" y="369.0" width="4" height="4" fill="#ffff00"/>
</g>
<g stroke="#000" stroke-width="1.9" fill="none" stroke-linecap="square">
<path d="M254 647 L261 655 M261 647 L254 655"/>
<path d="M1250 109 H1257 L1250 117 H1257"/>
<path d="M1383 506 L1387 510.5 L1391 506 M1387 510.5 V514"/>
</g>
</svg>
<div class="a" style="left:0;top:1029px;width:1400px;height:21px;background:#f0edeb"></div>
<div class="a" style="left:0;top:1029px;width:1400px;height:2px;background:#fff"></div>
<div class="a" style="left:0;top:1031px;width:1400px;height:1px;background:#999"></div>
<div class="a" style="left:0;top:1032px;width:1400px;height:1px;background:#fff"></div>
<div class="a" style="left:879px;top:1033px;width:1px;height:15px;background:#d4d0cc"></div>
<div class="a" style="left:991px;top:1033px;width:1px;height:15px;background:#d4d0cc"></div>
<div class="a" style="left:1079px;top:1033px;width:1px;height:15px;background:#d4d0cc"></div>
<div class="a" style="left:1167px;top:1033px;width:1px;height:15px;background:#d4d0cc"></div>
<div class="a" style="left:1295px;top:1033px;width:1px;height:15px;background:#d4d0cc"></div>
<div class="t" style="left:564px;top:1036px;font-size:11px;color:#1a1010">L:0</div>
<div class="t" style="left:996px;top:1036px;font-size:11px;color:#1a1010">Lat 22.5</div>
<div class="t" style="left:1084px;top:1036px;font-size:11px;color:#1a1010">Lon 121.5</div>
<div class="t" style="left:1172px;top:1036px;font-size:11px;color:#1a1010">Radius 4.98</div>
<div class="t" style="left:1300px;top:1036px;font-size:11px;color:#1a1010">Tilt 0.0</div>
<div class="a" style="left:0;top:1048px;width:1400px;height:1px;background:#2a2e34"></div>
<div class="a" style="left:0;top:1049px;width:1400px;height:1px;background:#c8d8ea"></div>

</body></html>
